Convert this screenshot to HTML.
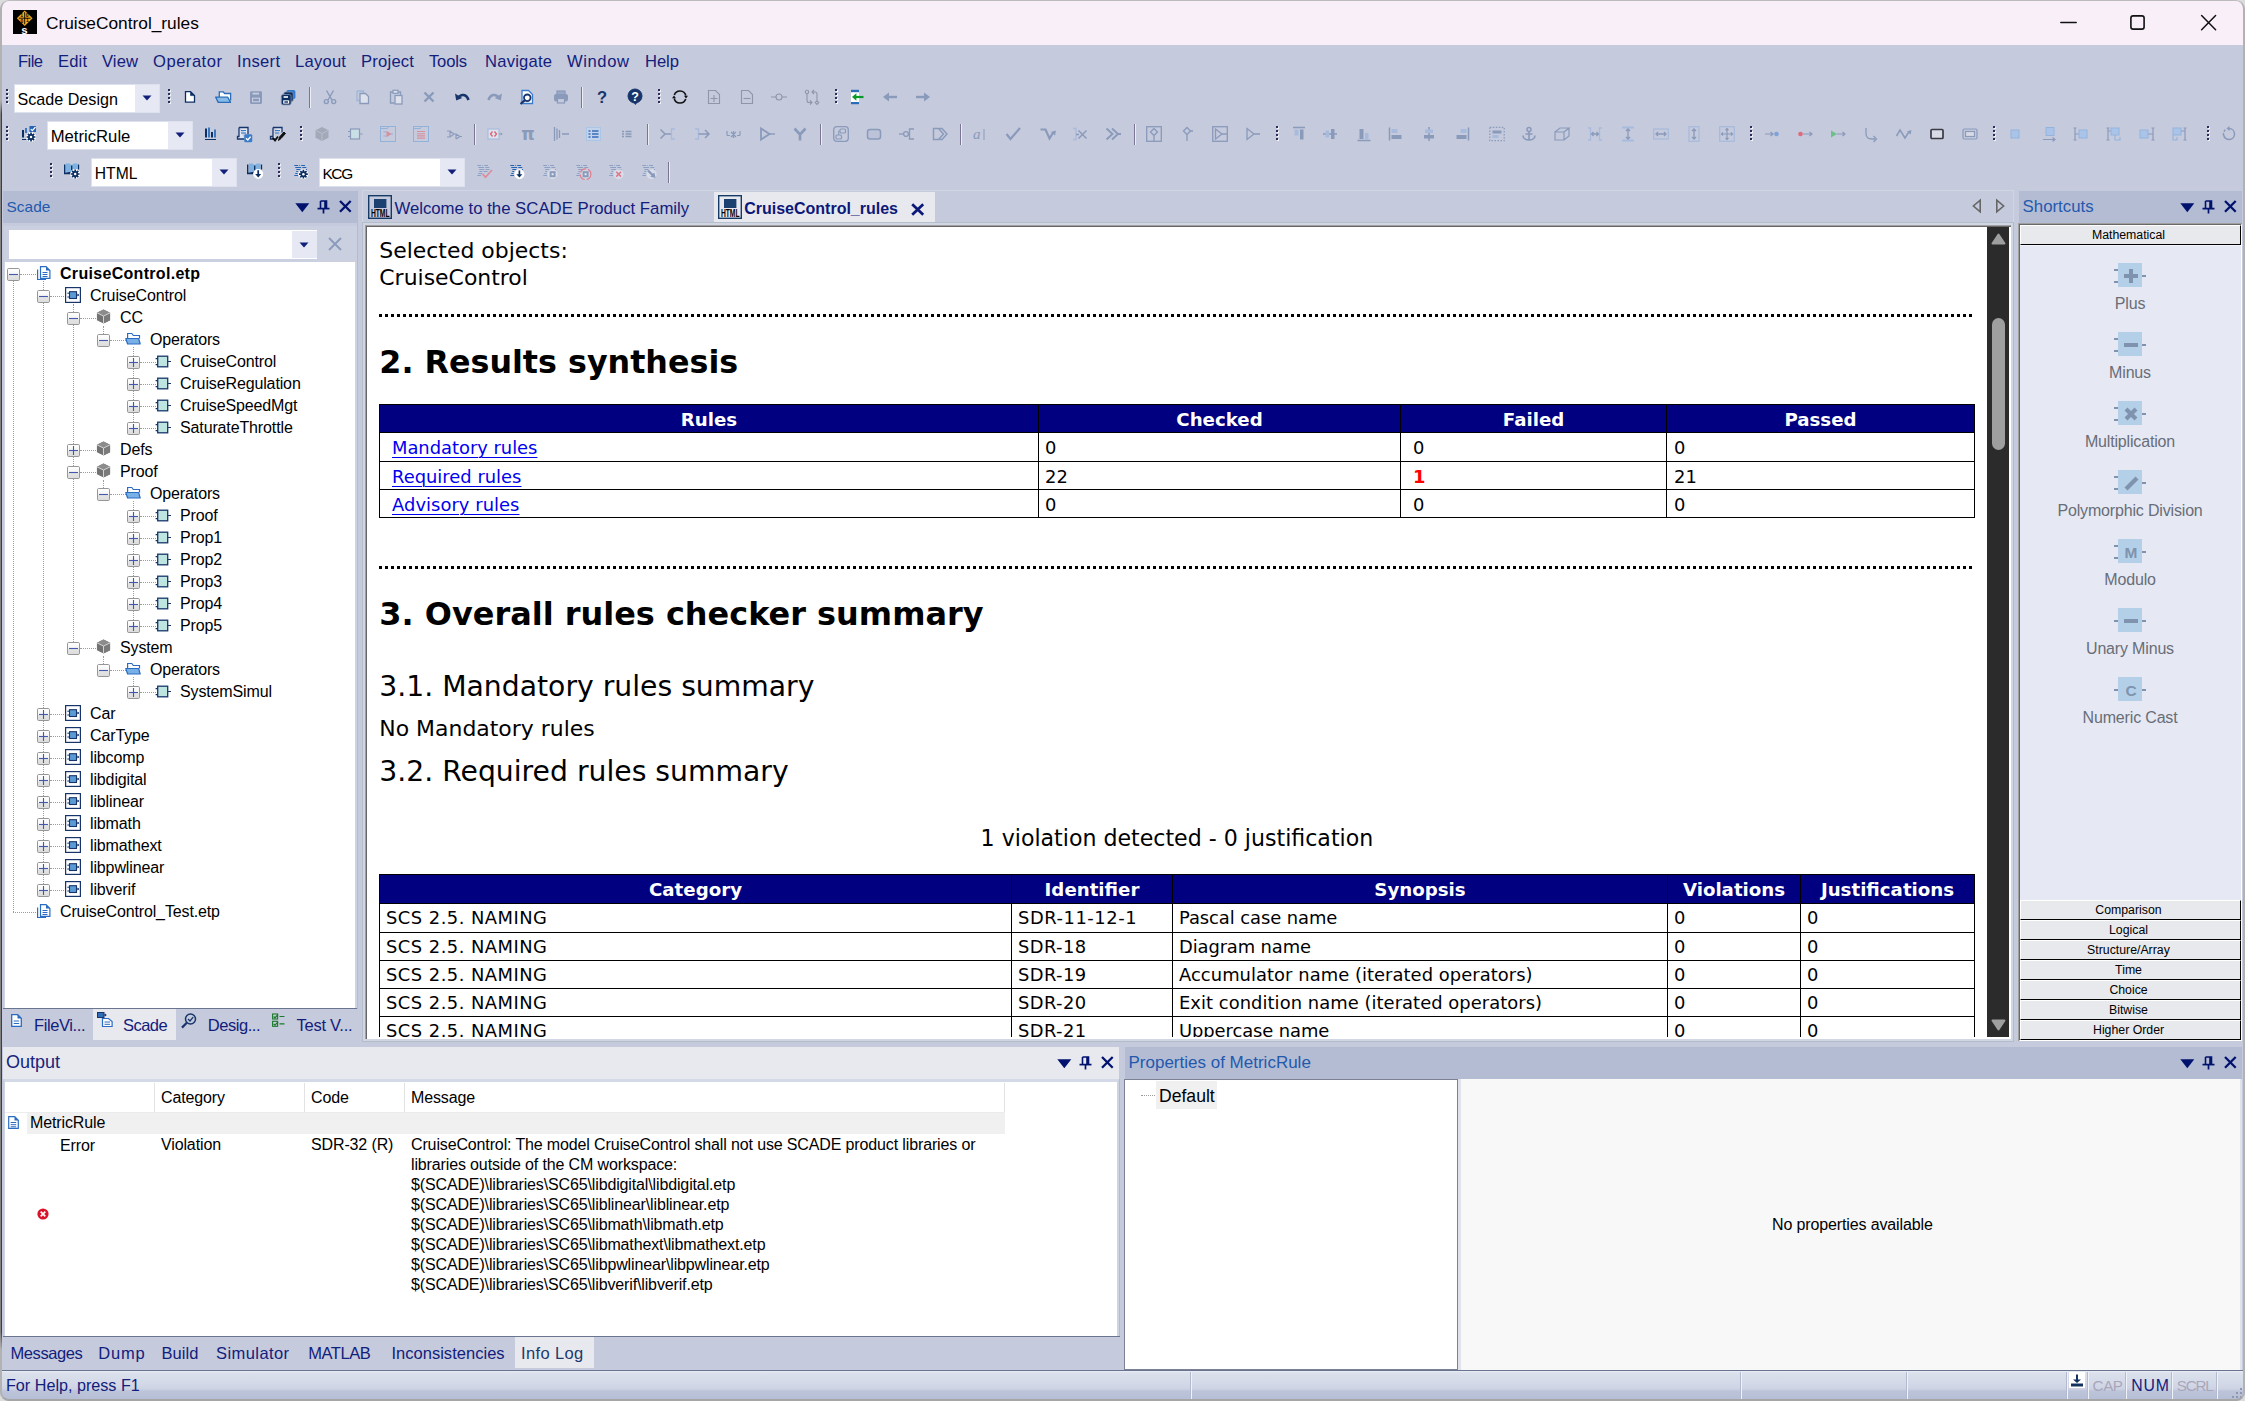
<!DOCTYPE html>
<html lang="en"><head><meta charset="utf-8"><title>CruiseControl_rules</title>
<style>
html,body{margin:0;padding:0;}
body{width:2245px;height:1401px;overflow:hidden;background:#dcdcdc;font-family:"Liberation Sans",sans-serif;}
#app{position:absolute;left:0;top:0;width:2245px;height:1401px;overflow:hidden;border-radius:9px;background:#c5cadc;}
#app div,#app svg,#app span.a,#app table.a{position:absolute;box-sizing:border-box;}
#app svg{overflow:visible;}
#winborder{position:absolute;left:0;top:0;width:2245px;height:1401px;box-sizing:border-box;border:2px solid #b2b2b2;border-top-width:1.5px;border-top-color:#bcbcbc;border-bottom-color:#a6a6a6;border-radius:9px;pointer-events:none;}
#winshadow{position:absolute;left:0;top:100px;width:2px;height:1250px;background:linear-gradient(90deg,#828282 0 50%,#3e3e42 50% 100%);-webkit-mask-image:linear-gradient(180deg,transparent 0,#000 14px,#000 1232px,transparent 100%);mask-image:linear-gradient(180deg,transparent 0,#000 14px,#000 1232px,transparent 100%);}

</style></head>
<body>
<div id="app">
<!-- frame -->
<div style="left:0px;top:0px;width:2245px;height:45px;background:#f8eff8;"></div>
<div style="left:0px;top:45px;width:2245px;height:1356px;background:#c5cadc;"></div>
<div style="left:13px;top:10px;width:24px;height:24px;background:#000;"></div>
<svg style="left:13px;top:10px;" width="24" height="24" viewBox="0 0 24 24"><path d="M11.7 0.6L19.6 8.2 11.7 16 3.9 8.2z" fill="#f3a81c"/><path d="M11.7 2.2v12M5.8 8.2h11.8" stroke="#000" stroke-width="0.9"/><text x="8.7" y="7" font-size="5" font-weight="bold" fill="#000" text-anchor="middle" font-family="Liberation Sans, sans-serif">1</text><text x="14.2" y="7.2" font-size="5" font-weight="bold" fill="#000" text-anchor="middle" font-family="Liberation Sans, sans-serif">0</text><text x="9" y="12.6" font-size="5" font-weight="bold" fill="#000" text-anchor="middle" font-family="Liberation Sans, sans-serif">0</text><text x="14.4" y="12.4" font-size="5" font-weight="bold" fill="#000" text-anchor="middle" font-family="Liberation Sans, sans-serif">1</text><text x="11.4" y="24" font-size="11.5" font-weight="bold" fill="#fff" text-anchor="middle" font-family="Liberation Sans, sans-serif">s</text></svg>
<div style="left:46px;top:12.0px;line-height:22px;font-size:17.31px;color:#000;white-space:nowrap;">CruiseControl_rules</div>
<svg style="left:2060px;top:16px;" width="18" height="14" viewBox="0 0 18 14"><path d="M0.8 6.4h15.4" stroke="#111" stroke-width="1.5" stroke-linecap="round"/></svg>
<svg style="left:2129px;top:14px;" width="18" height="18" viewBox="0 0 18 18"><rect x="1.9" y="1.9" width="13.2" height="13.2" rx="2.2" fill="none" stroke="#111" stroke-width="1.6"/></svg>
<svg style="left:2200px;top:14px;" width="18" height="18" viewBox="0 0 18 18"><path d="M1.6 1.5l14 14.2M15.6 1.5l-14 14.2" stroke="#111" stroke-width="1.5" stroke-linecap="round"/></svg>
<div style="left:18px;top:51.1px;line-height:21px;font-size:16.6px;color:#12207c;white-space:nowrap;letter-spacing:-0.583px;">File</div>
<div style="left:58px;top:51.1px;line-height:21px;font-size:16.6px;color:#12207c;white-space:nowrap;letter-spacing:0.132px;">Edit</div>
<div style="left:102px;top:51.1px;line-height:21px;font-size:16.6px;color:#12207c;white-space:nowrap;letter-spacing:0.106px;">View</div>
<div style="left:153px;top:51.1px;line-height:21px;font-size:16.6px;color:#12207c;white-space:nowrap;letter-spacing:0.499px;">Operator</div>
<div style="left:237px;top:51.1px;line-height:21px;font-size:16.6px;color:#12207c;white-space:nowrap;letter-spacing:0.297px;">Insert</div>
<div style="left:295px;top:51.1px;line-height:21px;font-size:16.6px;color:#12207c;white-space:nowrap;letter-spacing:0.232px;">Layout</div>
<div style="left:361px;top:51.1px;line-height:21px;font-size:16.6px;color:#12207c;white-space:nowrap;letter-spacing:0.223px;">Project</div>
<div style="left:429px;top:51.1px;line-height:21px;font-size:16.6px;color:#12207c;white-space:nowrap;letter-spacing:-0.188px;">Tools</div>
<div style="left:485px;top:51.1px;line-height:21px;font-size:16.6px;color:#12207c;white-space:nowrap;letter-spacing:0.212px;">Navigate</div>
<div style="left:567px;top:51.1px;line-height:21px;font-size:16.6px;color:#12207c;white-space:nowrap;letter-spacing:0.592px;">Window</div>
<div style="left:645px;top:51.1px;line-height:21px;font-size:16.6px;color:#12207c;white-space:nowrap;letter-spacing:-0.047px;">Help</div>
<!-- toolbars -->
<svg style="left:6px;top:89px;" width="4" height="16" viewBox="0 0 4 16"><rect x="1" y="1" width="2" height="2" fill="#f2f4fa"/><rect x="0" y="0" width="2" height="2" fill="#2e2b5a"/><rect x="1" y="5" width="2" height="2" fill="#f2f4fa"/><rect x="0" y="4" width="2" height="2" fill="#2e2b5a"/><rect x="1" y="9" width="2" height="2" fill="#f2f4fa"/><rect x="0" y="8" width="2" height="2" fill="#2e2b5a"/><rect x="1" y="13" width="2" height="2" fill="#f2f4fa"/><rect x="0" y="12" width="2" height="2" fill="#2e2b5a"/></svg>
<div style="left:14px;top:84px;width:146px;height:29px;background:#fff;border:1px solid #dde1ee;"></div><div style="left:135px;top:85px;width:24px;height:27px;background:#e6e9f3;"></div><svg style="left:142px;top:95px;" width="10" height="6" viewBox="0 0 10 6"><path d="M0.5 0.5h9L5 5.5z" fill="#12207c"/></svg><div style="left:17.5px;top:89.0px;line-height:20px;font-size:16.14px;color:#000;white-space:nowrap;">Scade Design</div>
<svg style="left:168px;top:89px;" width="4" height="16" viewBox="0 0 4 16"><rect x="1" y="1" width="2" height="2" fill="#f2f4fa"/><rect x="0" y="0" width="2" height="2" fill="#2e2b5a"/><rect x="1" y="5" width="2" height="2" fill="#f2f4fa"/><rect x="0" y="4" width="2" height="2" fill="#2e2b5a"/><rect x="1" y="9" width="2" height="2" fill="#f2f4fa"/><rect x="0" y="8" width="2" height="2" fill="#2e2b5a"/><rect x="1" y="13" width="2" height="2" fill="#f2f4fa"/><rect x="0" y="12" width="2" height="2" fill="#2e2b5a"/></svg>
<svg style="left:182.0px;top:89.0px;" width="16" height="16" viewBox="0 0 16 16"><path d="M3.5 2.6h5l4 4v6.6h-9z" stroke="#0b2f63" stroke-width="1.3" fill="#fff" /><path d="M8.5 2.6v4h4z" stroke="#0b2f63" stroke-width="0.6" fill="#0b2f63" /></svg>
<svg style="left:215.0px;top:89.0px;" width="16" height="16" viewBox="0 0 16 16"><path d="M4.3 8V2.8h4l1.3 1.7h6v7" stroke="#2b6cb8" stroke-width="1.3" fill="#fff" /><path d="M0.7 8.2h12.1l2.7 5.2H3.2z" stroke="#2b6cb8" stroke-width="1.3" fill="#86bbe8" stroke-linejoin="round"/></svg>
<svg style="left:248.0px;top:89.0px;" width="16" height="16" viewBox="0 0 16 16"><rect x="2" y="2.2" width="12" height="12.7" rx="1.3" stroke="none" stroke-width="0" fill="#8a9abb" /><rect x="4.5" y="3.7" width="6.5" height="1.8" rx="0" stroke="none" stroke-width="0" fill="#c9cede" /><rect x="4" y="8.7" width="8" height="4.6" rx="0" stroke="none" stroke-width="0" fill="#c9cede" /><rect x="5.1" y="9.8" width="5.8" height="2.4" rx="0" stroke="none" stroke-width="0" fill="#8a9abb" /></svg>
<svg style="left:280.0px;top:89.0px;" width="16" height="16" viewBox="0 0 16 16"><rect x="6.3" y="1" width="9.1" height="9" rx="1.8" stroke="none" stroke-width="0" fill="#2f7acc" /><rect x="3.8" y="3" width="9.4" height="9.6" rx="1.8" stroke="#8a93ad" stroke-width="0.8" fill="#0b2f63" /><rect x="1.3" y="5.5" width="9.8" height="10.4" rx="1.8" stroke="#8a93ad" stroke-width="0.8" fill="#0b2f63" /><rect x="3.6" y="7.2" width="4.4" height="1.6" rx="0" stroke="none" stroke-width="0" fill="#fff" /><rect x="3.2" y="11.3" width="6" height="3.3" rx="0" stroke="none" stroke-width="0" fill="#fff" /><rect x="4.4" y="12.3" width="3.6" height="1.4" rx="0" stroke="none" stroke-width="0" fill="#0b2f63" /></svg>
<svg style="left:322.0px;top:89.0px;" width="16" height="16" viewBox="0 0 16 16"><path d="M4.5 1.5l5.5 9.5M11.5 1.5L6 11" stroke="#8a9abb" stroke-width="1.4" fill="none" /><circle cx="4.3" cy="12.6" r="2" stroke="#8a9abb" stroke-width="1.4" fill="none"/><circle cx="11.7" cy="12.6" r="2" stroke="#8a9abb" stroke-width="1.4" fill="none"/></svg>
<svg style="left:355.0px;top:89.0px;" width="16" height="16" viewBox="0 0 16 16"><path d="M2 2h6.5v2M2 2v9.5h2.5" stroke="#9db6d9" stroke-width="1.3" fill="none" /><path d="M5 4.5h5.5l3 3v7h-8.5z" stroke="#8a9abb" stroke-width="1.3" fill="#dde1ec" /></svg>
<svg style="left:387.5px;top:89.0px;" width="16" height="16" viewBox="0 0 16 16"><path d="M5 3H2.5v11h4" stroke="#8a9abb" stroke-width="1.3" fill="none" /><path d="M10 3h2.5v3" stroke="#8a9abb" stroke-width="1.3" fill="none" /><rect x="5" y="1.3" width="5" height="3" rx="0" stroke="#8a9abb" stroke-width="1.2" fill="#dde1ec" /><rect x="7" y="6.5" width="7" height="8.5" rx="0" stroke="#8a9abb" stroke-width="1.3" fill="#dde1ec" /></svg>
<svg style="left:421.0px;top:89.0px;" width="16" height="16" viewBox="0 0 16 16"><path d="M3.5 3.5l9 9M12.5 3.5l-9 9" stroke="#8a9abb" stroke-width="2.4" fill="none" /></svg>
<svg style="left:454.0px;top:89.0px;" width="16" height="16" viewBox="0 0 16 16"><path d="M4 9C7 4.5 12.5 5 14.5 11" stroke="#17356b" stroke-width="2.6" fill="none" /><path d="M1 4.5l1.2 7 6-2.4z" fill="#17356b"/></svg>
<svg style="left:486.5px;top:89.0px;" width="16" height="16" viewBox="0 0 16 16"><path d="M12 9C9 4.5 3.5 5 1.5 11" stroke="#8a9abb" stroke-width="2.6" fill="none" /><path d="M15 4.5l-1.2 7-6-2.4z" fill="#8a9abb"/></svg>
<svg style="left:519.0px;top:89.0px;" width="16" height="16" viewBox="0 0 16 16"><path d="M3 1.5h6.5l4 4v9H3z" stroke="#3b7cc9" stroke-width="1.3" fill="#fff" /><circle cx="8.3" cy="8.8" r="3.3" stroke="#17356b" stroke-width="1.8" fill="#fff"/><path d="M6 11.2L1.5 15" stroke="#17356b" stroke-width="2.2" fill="none" /></svg>
<svg style="left:553.0px;top:89.0px;" width="16" height="16" viewBox="0 0 16 16"><rect x="4" y="2" width="8" height="4" rx="0" stroke="#8a9abb" stroke-width="1.2" fill="#9aa9c6" /><rect x="1.5" y="5.5" width="13" height="6.5" rx="1.5" stroke="#8a9abb" stroke-width="1" fill="#8a9abb" /><rect x="4.5" y="9.5" width="7" height="4.5" rx="0" stroke="#8a9abb" stroke-width="1.2" fill="#c5cadc" /></svg>
<svg style="left:594.0px;top:89.0px;" width="16" height="16" viewBox="0 0 16 16"><text x="8" y="14" font-size="16.5" font-weight="bold" fill="#17356b" text-anchor="middle" font-family="Liberation Sans, sans-serif">?</text></svg>
<svg style="left:627.0px;top:89.0px;" width="16" height="16" viewBox="0 0 16 16"><circle cx="8" cy="7" r="7" stroke="#17356b" stroke-width="1" fill="#17356b"/><path d="M6 13l2.5 3 2-3z" fill="#17356b"/><text x="8" y="11.6" font-size="12.5" font-weight="bold" fill="#fff" text-anchor="middle" font-family="Liberation Sans, sans-serif">?</text></svg>
<svg style="left:672.0px;top:89.0px;" width="16" height="16" viewBox="0 0 16 16"><path d="M13.8 6.5A6 6 0 0 0 2.3 6" stroke="#111" stroke-width="1.6" fill="none" /><path d="M2.2 9.5A6 6 0 0 0 13.7 10" stroke="#111" stroke-width="1.6" fill="none" /><path d="M12 6.8h4l-2 2.8z M4 9.2H0l2-2.8z" fill="#111"/></svg>
<svg style="left:705.5px;top:89.0px;" width="16" height="16" viewBox="0 0 16 16"><path d="M2.5 1.5h7l4 4v9h-11z" stroke="#9096a8" stroke-width="1.1" fill="none" /><path d="M8 6v7M4.5 9.5h7" stroke="#9096a8" stroke-width="1.1" fill="none" /></svg>
<svg style="left:738.5px;top:89.0px;" width="16" height="16" viewBox="0 0 16 16"><path d="M2.5 1.5h7l4 4v9h-11z" stroke="#9096a8" stroke-width="1.1" fill="none" /><path d="M4.5 9.5h7" stroke="#9096a8" stroke-width="1.1" fill="none" /></svg>
<svg style="left:771.0px;top:89.0px;" width="16" height="16" viewBox="0 0 16 16"><path d="M0 8h5M11 8h5" stroke="#9096a8" stroke-width="1.1" fill="none" /><circle cx="8" cy="8" r="3" stroke="#9096a8" stroke-width="1.1" fill="none"/></svg>
<svg style="left:804.0px;top:89.0px;" width="16" height="16" viewBox="0 0 16 16"><circle cx="3" cy="3" r="1.7" stroke="#9096a8" stroke-width="1.1" fill="none"/><path d="M13 11.8l1.8 1.8-1.8 1.8-1.8-1.8z" stroke="#9096a8" stroke-width="1.1" fill="none" /><path d="M3 5v6.5q0 2 2 2h2.5M13 11.5V5q0-2-2-2H8.5M6 11.5l2 2-2 2M10 1l-2 2 2 2" stroke="#9096a8" stroke-width="1.1" fill="none" /></svg>
<svg style="left:848.0px;top:89.0px;" width="16" height="16" viewBox="0 0 16 16"><rect x="3" y="1" width="8" height="14" rx="0" stroke="none" stroke-width="0" fill="#fff" /><rect x="3" y="0.8" width="8" height="2.4" rx="0" stroke="none" stroke-width="0" fill="#2b6cb8" /><rect x="3" y="13" width="8" height="2.2" rx="0" stroke="none" stroke-width="0" fill="#2b6cb8" /><path d="M7 8h8.5" stroke="#0a9a2a" stroke-width="2.2" fill="none" /><path d="M4 8l4.4-3.8v7.6z" fill="#0a9a2a"/></svg>
<svg style="left:882.0px;top:89.0px;" width="16" height="16" viewBox="0 0 16 16"><path d="M6 8h9" stroke="#8a9abb" stroke-width="2.4" fill="none" /><path d="M1 8l6-4.5v9z" fill="#8a9abb"/></svg>
<svg style="left:915.0px;top:89.0px;" width="16" height="16" viewBox="0 0 16 16"><path d="M1 8h9" stroke="#8a9abb" stroke-width="2.4" fill="none" /><path d="M15 8l-6-4.5v9z" fill="#8a9abb"/></svg>
<div style="left:309px;top:87px;width:2px;height:21px;background:linear-gradient(90deg,#7a7592 0 50%,#eceef6 50% 100%);"></div>
<div style="left:581px;top:87px;width:2px;height:21px;background:linear-gradient(90deg,#7a7592 0 50%,#eceef6 50% 100%);"></div>
<svg style="left:658px;top:89px;" width="4" height="16" viewBox="0 0 4 16"><rect x="1" y="1" width="2" height="2" fill="#f2f4fa"/><rect x="0" y="0" width="2" height="2" fill="#2e2b5a"/><rect x="1" y="5" width="2" height="2" fill="#f2f4fa"/><rect x="0" y="4" width="2" height="2" fill="#2e2b5a"/><rect x="1" y="9" width="2" height="2" fill="#f2f4fa"/><rect x="0" y="8" width="2" height="2" fill="#2e2b5a"/><rect x="1" y="13" width="2" height="2" fill="#f2f4fa"/><rect x="0" y="12" width="2" height="2" fill="#2e2b5a"/></svg>
<svg style="left:835px;top:89px;" width="4" height="16" viewBox="0 0 4 16"><rect x="1" y="1" width="2" height="2" fill="#f2f4fa"/><rect x="0" y="0" width="2" height="2" fill="#2e2b5a"/><rect x="1" y="5" width="2" height="2" fill="#f2f4fa"/><rect x="0" y="4" width="2" height="2" fill="#2e2b5a"/><rect x="1" y="9" width="2" height="2" fill="#f2f4fa"/><rect x="0" y="8" width="2" height="2" fill="#2e2b5a"/><rect x="1" y="13" width="2" height="2" fill="#f2f4fa"/><rect x="0" y="12" width="2" height="2" fill="#2e2b5a"/></svg>
<svg style="left:6px;top:126px;" width="4" height="16" viewBox="0 0 4 16"><rect x="1" y="1" width="2" height="2" fill="#f2f4fa"/><rect x="0" y="0" width="2" height="2" fill="#2e2b5a"/><rect x="1" y="5" width="2" height="2" fill="#f2f4fa"/><rect x="0" y="4" width="2" height="2" fill="#2e2b5a"/><rect x="1" y="9" width="2" height="2" fill="#f2f4fa"/><rect x="0" y="8" width="2" height="2" fill="#2e2b5a"/><rect x="1" y="13" width="2" height="2" fill="#f2f4fa"/><rect x="0" y="12" width="2" height="2" fill="#2e2b5a"/></svg>
<svg style="left:21.0px;top:126.0px;" width="16" height="16" viewBox="0 0 16 16"><rect x="1" y="4" width="2" height="7.5" rx="0" stroke="none" stroke-width="0" fill="#0b2f63" /><rect x="4" y="2" width="2" height="5" rx="0" stroke="none" stroke-width="0" fill="#3c78c0" /><path d="M1 13.5h4.5" stroke="#0b2f63" stroke-width="1" fill="none" /><rect x="8.5" y="0" width="6.5" height="6" rx="0" stroke="none" stroke-width="0" fill="#2563b4" /><path d="M9.8 3.1l1.5 1.5 3.2-3.6" stroke="#fff" stroke-width="1.2" fill="none" /><circle cx="10" cy="11" r="5.1" fill="#fff"/><path d="M11.50 11.00L14.40 11.00M11.06 12.06L13.11 14.11M10.00 12.50L10.00 15.40M8.94 12.06L6.89 14.11M8.50 11.00L5.60 11.00M8.94 9.94L6.89 7.89M10.00 9.50L10.00 6.60M11.06 9.94L13.11 7.89" stroke="#0b2f63" stroke-width="1.7"/><circle cx="10" cy="11" r="2.9" fill="#0b2f63"/><circle cx="10" cy="11" r="1.25" fill="#fff"/></svg>
<div style="left:47px;top:121px;width:146px;height:29px;background:#fff;border:1px solid #dde1ee;"></div><div style="left:168px;top:122px;width:24px;height:27px;background:#e6e9f3;"></div><svg style="left:175px;top:132px;" width="10" height="6" viewBox="0 0 10 6"><path d="M0.5 0.5h9L5 5.5z" fill="#12207c"/></svg><div style="left:50.7px;top:125.5px;line-height:21px;font-size:16.68px;color:#000;white-space:nowrap;">MetricRule</div>
<svg style="left:202.0px;top:126.0px;" width="16" height="16" viewBox="0 0 16 16"><rect x="3" y="2.5" width="2" height="9" rx="0" stroke="none" stroke-width="0" fill="#0b2f63" /><rect x="6" y="1.5" width="2" height="10" rx="0" stroke="none" stroke-width="0" fill="#3c78c0" /><rect x="9" y="6" width="2" height="5.5" rx="0" stroke="none" stroke-width="0" fill="#0b2f63" /><rect x="12" y="3.5" width="2" height="8" rx="0" stroke="none" stroke-width="0" fill="#3c78c0" /><path d="M3 13.5h11" stroke="#0b2f63" stroke-width="1" fill="none" /></svg>
<svg style="left:236.0px;top:126.0px;" width="16" height="16" viewBox="0 0 16 16"><path d="M3 1.5h9v7M3 1.5v9H1.5v2.5h7" stroke="#17356b" stroke-width="1.3" fill="#dfe7f5" /><path d="M5 4.5h5M5 7h5" stroke="#3b7cc9" stroke-width="1.1" fill="none" /><rect x="8.5" y="8.5" width="7.5" height="7.5" rx="1" stroke="#3b7cc9" stroke-width="0.5" fill="#3b7cc9" /><path d="M10 12.2l1.8 1.8 2.8-3.4" stroke="#fff" stroke-width="1.4" fill="none" /></svg>
<svg style="left:269.0px;top:126.0px;" width="16" height="16" viewBox="0 0 16 16"><path d="M4 1.5h9v5M4 1.5v9H1.5v2.5h5" stroke="#17356b" stroke-width="1.3" fill="#dfe7f5" /><path d="M6 4.5h5M6 7h4" stroke="#3b7cc9" stroke-width="1.1" fill="none" /><path d="M3.5 11.5l2.5 3 3-4" stroke="#111" stroke-width="1.8" fill="none" /><path d="M9.5 14.5l1-3.5 4.5-5 1.5 1.5-4.5 5z" stroke="#111" stroke-width="1" fill="#111" /></svg>
<svg style="left:314.0px;top:126.0px;" width="16" height="16" viewBox="0 0 16 16"><path d="M8 1l6.5 3.3v7.4L8 15l-6.5-3.3V4.3z" fill="#a3a9b8"/><path d="M1.5 4.3L8 7.6l6.5-3.3M8 7.6V15" stroke="#b9becb" stroke-width="1" fill="none"/></svg>
<svg style="left:347.0px;top:126.0px;" width="16" height="16" viewBox="0 0 16 16"><rect x="3.5" y="3" width="9" height="10" rx="0" stroke="#8a9abb" stroke-width="1.2" fill="#c9dfe6" /><path d="M1 5.5h2.5M1 10.5h2.5M12.5 8H15.5" stroke="#8a9abb" stroke-width="1.2" fill="none" /></svg>
<svg style="left:380.0px;top:126.0px;" width="16" height="16" viewBox="0 0 16 16"><rect x="0.5" y="0.5" width="15" height="15" rx="0" stroke="#93b2da" stroke-width="1" fill="none" /><path d="M0.5 2.5h7l1-2" stroke="#93b2da" stroke-width="1" fill="none" /><path d="M3.5 6h3M3.5 10h3M10 8h3" stroke="#93b2da" stroke-width="1" fill="none" /><path d="M6.5 4.8l5 3.2-5 3.2z" fill="#d9909c"/></svg>
<svg style="left:412.5px;top:126.0px;" width="16" height="16" viewBox="0 0 16 16"><rect x="0.5" y="0.5" width="15" height="15" rx="0" stroke="#93b2da" stroke-width="1" fill="none" /><path d="M0.5 2.5h7l1-2" stroke="#93b2da" stroke-width="1" fill="none" /><path d="M4 5.5h8M4 7.7h8M4 9.9h8M4 12.1h8" stroke="#d9909c" stroke-width="1.1" fill="none" /></svg>
<svg style="left:446.0px;top:126.0px;" width="16" height="16" viewBox="0 0 16 16"><path d="M1 5h3l4 3-4 3H1M4 5v6M8 8h2l4 2.5-4 2.5M10 8v5M14 10.5h2" stroke="#8a9abb" stroke-width="1.1" fill="none" /></svg>
<svg style="left:486.7px;top:126.0px;" width="16" height="16" viewBox="0 0 16 16"><rect x="1" y="3" width="11" height="10" rx="0" stroke="#a8bbdc" stroke-width="1.2" fill="#dfe3ee" /><path d="M5.5 5.5L3.5 8l2 2.5M7.5 5.5l2 2.5-2 2.5" stroke="#e06070" stroke-width="1.3" fill="none" /><path d="M12 8h3M14 6.8l1.2 1.2-1.2 1.2" stroke="#8a9abb" stroke-width="1" fill="none" /></svg>
<svg style="left:520.0px;top:126.0px;" width="16" height="16" viewBox="0 0 16 16"><text x="8" y="13.5" font-size="17" font-weight="bold" fill="#8a9abb" text-anchor="middle" font-family="DejaVu Sans, sans-serif">π</text></svg>
<svg style="left:553.0px;top:126.0px;" width="16" height="16" viewBox="0 0 16 16"><path d="M1.5 1v14M4 2.5v11M6.5 4v8M9 8h7" stroke="#8a9abb" stroke-width="1.3" fill="none" /></svg>
<svg style="left:586.0px;top:126.0px;" width="16" height="16" viewBox="0 0 16 16"><rect x="0.5" y="1.5" width="14" height="13" rx="0" stroke="#a9c6e6" stroke-width="1" fill="#c3d3ea" /><path d="M2.5 5h2M6 5h6.5M2.5 8h2M6 8h6.5M2.5 11h2M6 11h6.5" stroke="#5b86c8" stroke-width="1.8" fill="none" /></svg>
<svg style="left:619.0px;top:126.0px;" width="16" height="16" viewBox="0 0 16 16"><path d="M3 5.5h2M6.5 5.5h6M3 8h2M6.5 8h6M3 10.5h2M6.5 10.5h6" stroke="#8a9abb" stroke-width="1.6" fill="none" /></svg>
<svg style="left:659.6px;top:126.0px;" width="16" height="16" viewBox="0 0 16 16"><path d="M0.5 3.5L5 8 0.5 12.5M5 8h6" stroke="#8a9abb" stroke-width="1.5" fill="none" /><path d="M15 3h-3.5v10H15" stroke="#a8bbdc" stroke-width="1.3" fill="none" /></svg>
<svg style="left:693.5px;top:126.0px;" width="16" height="16" viewBox="0 0 16 16"><path d="M1 3h3.5v10H1" stroke="#a8bbdc" stroke-width="1.3" fill="none" /><path d="M4.5 8H15M11 4l4 4-4 4" stroke="#8a9abb" stroke-width="1.5" fill="none" /></svg>
<svg style="left:725.7px;top:126.0px;" width="16" height="16" viewBox="0 0 16 16"><path d="M1 5v4.5M14 5v4.5M1 9.5h3M14 9.5h-3M5 6l5 5M10 6l-5 5M7.5 5v7" stroke="#8a9abb" stroke-width="1.2" fill="none" /></svg>
<svg style="left:759.0px;top:126.0px;" width="16" height="16" viewBox="0 0 16 16"><path d="M2 2.5l8.5 5.5L2 13.5z" stroke="#8a9abb" stroke-width="1.8" fill="none" /><path d="M10.5 8H16" stroke="#8a9abb" stroke-width="1.4" fill="none" /></svg>
<svg style="left:792.0px;top:126.0px;" width="16" height="16" viewBox="0 0 16 16"><path d="M2.5 2.5L8 8.5l5.5-6M8 8.5V14.5" stroke="#8a9abb" stroke-width="2.6" fill="none" /></svg>
<svg style="left:833.0px;top:126.0px;" width="16" height="16" viewBox="0 0 16 16"><rect x="0.7" y="0.7" width="14.6" height="14.6" rx="3" stroke="#8a9abb" stroke-width="1.3" fill="none" /><rect x="7" y="3" width="5.5" height="4" rx="1" stroke="#8a9abb" stroke-width="1.2" fill="#c5cadc" /><rect x="3" y="9" width="5.5" height="4" rx="1" stroke="#8a9abb" stroke-width="1.2" fill="#c5cadc" /><path d="M5.7 9V5h1.3" stroke="#8a9abb" stroke-width="1" fill="none" /></svg>
<svg style="left:866.0px;top:126.0px;" width="16" height="16" viewBox="0 0 16 16"><rect x="1.5" y="3.5" width="13" height="9.5" rx="2.5" stroke="#8a9abb" stroke-width="1.5" fill="#bcc2d8" /></svg>
<svg style="left:899.0px;top:126.0px;" width="16" height="16" viewBox="0 0 16 16"><path d="M0 8h4.5" stroke="#8a9abb" stroke-width="1.3" fill="none" /><circle cx="7" cy="8" r="2.4" stroke="#8a9abb" stroke-width="1.3" fill="none"/><path d="M15 3H10.5v10H15" stroke="#8a9abb" stroke-width="1.3" fill="none" /></svg>
<svg style="left:931.7px;top:126.0px;" width="16" height="16" viewBox="0 0 16 16"><path d="M1.5 2.5h5l5 5.5-5 5.5h-5zM7.5 2.5h2.5l5 5.5-5 5.5H7.5" stroke="#8a9abb" stroke-width="1.4" fill="none" /></svg>
<svg style="left:972.6px;top:126.0px;" width="16" height="16" viewBox="0 0 16 16"><text x="0" y="13" font-size="15" font-style="italic" fill="#8a9abb" font-family="Liberation Serif, serif">a</text><path d="M11 3v11" stroke="#8a9abb" stroke-width="1" fill="none" /></svg>
<svg style="left:1005.4px;top:126.0px;" width="16" height="16" viewBox="0 0 16 16"><path d="M1.5 8l4 5L15 2" stroke="#8a9abb" stroke-width="2.2" fill="none" /></svg>
<svg style="left:1039.6px;top:126.0px;" width="16" height="16" viewBox="0 0 16 16"><path d="M0.5 3.5h5l4 9 4-6.5" stroke="#8a9abb" stroke-width="2.2" fill="none" /><path d="M16 4.5l-5 1.5 4 3.5z" fill="#8a9abb"/></svg>
<svg style="left:1072.0px;top:126.0px;" width="16" height="16" viewBox="0 0 16 16"><path d="M1 2.5h3v11H1" stroke="#a8bbdc" stroke-width="1.3" fill="none" /><path d="M6.5 4.5l8 8M14.5 4.5l-8 8M4 8.5h3" stroke="#8a9abb" stroke-width="1.5" fill="none" /></svg>
<svg style="left:1104.7px;top:126.0px;" width="16" height="16" viewBox="0 0 16 16"><path d="M1.5 2.5l6 5.5-6 5.5M7 2.5l6 5.5-6 5.5M13 8h3" stroke="#8a9abb" stroke-width="1.9" fill="none" /></svg>
<svg style="left:1146.0px;top:126.0px;" width="16" height="16" viewBox="0 0 16 16"><rect x="0.7" y="0.7" width="14.6" height="14.6" rx="0" stroke="#8a9abb" stroke-width="1.3" fill="none" /><path d="M8 2.5l3.5 3.5L8 9.5 4.5 6zM8 9.5V15" stroke="#8a9abb" stroke-width="1.3" fill="none" /></svg>
<svg style="left:1179.0px;top:126.0px;" width="16" height="16" viewBox="0 0 16 16"><path d="M8 1.5l3.5 3.5L8 8.5 4.5 5zM8 8.5V15M11.5 5H14" stroke="#8a9abb" stroke-width="1.3" fill="none" /></svg>
<svg style="left:1212.0px;top:126.0px;" width="16" height="16" viewBox="0 0 16 16"><rect x="0.7" y="0.7" width="14.6" height="14.6" rx="0" stroke="#8a9abb" stroke-width="1.3" fill="none" /><path d="M3.5 3l6.5 5-6.5 5zM10 8h5" stroke="#8a9abb" stroke-width="1.3" fill="none" /></svg>
<svg style="left:1245.0px;top:126.0px;" width="16" height="16" viewBox="0 0 16 16"><path d="M2 2.5l7 5.5-7 5.5zM9 8h6" stroke="#8a9abb" stroke-width="1.3" fill="none" /></svg>
<svg style="left:1290.5px;top:126.0px;" width="16" height="16" viewBox="0 0 16 16"><path d="M2 1.5h12" stroke="#8a9abb" stroke-width="1.5" fill="none" /><rect x="3.5" y="3.5" width="4" height="6" rx="0" stroke="none" stroke-width="0" fill="#a8bbdc" /><rect x="9" y="3.5" width="3.5" height="10" rx="0" stroke="none" stroke-width="0" fill="#8a9abb" /></svg>
<svg style="left:1322.4px;top:126.0px;" width="16" height="16" viewBox="0 0 16 16"><path d="M1 8h14" stroke="#8a9abb" stroke-width="1.5" fill="none" /><rect x="3.5" y="4.5" width="3.5" height="7" rx="0" stroke="none" stroke-width="0" fill="#a8bbdc" /><rect x="9" y="3" width="3.5" height="10" rx="0" stroke="none" stroke-width="0" fill="#8a9abb" /></svg>
<svg style="left:1356.0px;top:126.0px;" width="16" height="16" viewBox="0 0 16 16"><path d="M1.5 14.5h13" stroke="#8a9abb" stroke-width="1.5" fill="none" /><rect x="3.5" y="3" width="4" height="10" rx="0" stroke="none" stroke-width="0" fill="#8a9abb" /><rect x="9" y="7" width="3.5" height="6" rx="0" stroke="none" stroke-width="0" fill="#a8bbdc" /></svg>
<svg style="left:1388.0px;top:126.0px;" width="16" height="16" viewBox="0 0 16 16"><path d="M1.5 1.5v13" stroke="#8a9abb" stroke-width="1.5" fill="none" /><rect x="3.5" y="3" width="6" height="4" rx="0" stroke="none" stroke-width="0" fill="#a8bbdc" /><rect x="3.5" y="9" width="10" height="4" rx="0" stroke="none" stroke-width="0" fill="#8a9abb" /></svg>
<svg style="left:1421.0px;top:126.0px;" width="16" height="16" viewBox="0 0 16 16"><path d="M8 1v14" stroke="#8a9abb" stroke-width="1.5" fill="none" /><rect x="4" y="3.5" width="8" height="3.5" rx="0" stroke="none" stroke-width="0" fill="#a8bbdc" /><rect x="3" y="9" width="10" height="3.5" rx="0" stroke="none" stroke-width="0" fill="#8a9abb" /></svg>
<svg style="left:1454.0px;top:126.0px;" width="16" height="16" viewBox="0 0 16 16"><path d="M14.5 1.5v13" stroke="#8a9abb" stroke-width="1.5" fill="none" /><rect x="6.5" y="3" width="6" height="4" rx="0" stroke="none" stroke-width="0" fill="#a8bbdc" /><rect x="2.5" y="9" width="10" height="4" rx="0" stroke="none" stroke-width="0" fill="#8a9abb" /></svg>
<svg style="left:1488.5px;top:126.0px;" width="16" height="16" viewBox="0 0 16 16"><rect x="0.8" y="1.3" width="14.4" height="13.4" rx="0" stroke="#8a9abb" stroke-width="1.2" fill="none" stroke-dasharray="1.5 1.5"/><rect x="3.5" y="4.5" width="9" height="3" rx="0" stroke="none" stroke-width="0" fill="#8a9abb" /><rect x="3.5" y="9" width="6" height="3" rx="0" stroke="none" stroke-width="0" fill="#a8bbdc" /></svg>
<svg style="left:1520.6px;top:126.0px;" width="16" height="16" viewBox="0 0 16 16"><circle cx="8" cy="3.5" r="2" stroke="#8a9abb" stroke-width="1.5" fill="none"/><path d="M8 5.5v8M4.5 8h7M2 9.5c0 3 3 4.5 6 4.5s6-1.5 6-4.5" stroke="#8a9abb" stroke-width="1.6" fill="none" /></svg>
<svg style="left:1554.0px;top:126.0px;" width="16" height="16" viewBox="0 0 16 16"><path d="M1 6h9v8H1zM1 6l5-4h9l-5 4M15 2v8l-5 4" stroke="#8a9abb" stroke-width="1.2" fill="none" /></svg>
<svg style="left:1586.6px;top:126.0px;" width="16" height="16" viewBox="0 0 16 16"><path d="M1 2h2.5v12H1M15 2h-2.5v12H15" stroke="#a8bbdc" stroke-width="1.3" fill="none" /><path d="M4.5 8h7M6.5 6l-2 2 2 2M9.5 6l2 2-2 2" stroke="#8a9abb" stroke-width="1.3" fill="none" /></svg>
<svg style="left:1619.8px;top:126.0px;" width="16" height="16" viewBox="0 0 16 16"><path d="M2 1.5h12M2 14.5h12" stroke="#a8bbdc" stroke-width="2" fill="none" /><path d="M8 3v10M6 5l2-2 2 2M6 11l2 2 2-2" stroke="#8a9abb" stroke-width="1.3" fill="none" /></svg>
<svg style="left:1653.0px;top:126.0px;" width="16" height="16" viewBox="0 0 16 16"><rect x="0.7" y="3" width="14.6" height="10" rx="0" stroke="#a8bbdc" stroke-width="1.3" fill="none" /><path d="M3 8h10M5 6l-2 2 2 2M11 6l2 2-2 2" stroke="#8a9abb" stroke-width="1.3" fill="none" /></svg>
<svg style="left:1686.4px;top:126.0px;" width="16" height="16" viewBox="0 0 16 16"><rect x="3" y="0.7" width="10" height="14.6" rx="0" stroke="#a8bbdc" stroke-width="1.3" fill="none" /><path d="M8 3v10M6 5l2-2 2 2M6 11l2 2 2-2" stroke="#8a9abb" stroke-width="1.3" fill="none" /></svg>
<svg style="left:1719.0px;top:126.0px;" width="16" height="16" viewBox="0 0 16 16"><rect x="0.7" y="0.7" width="14.6" height="14.6" rx="0" stroke="#a8bbdc" stroke-width="1.3" fill="none" /><path d="M8 2.5v11M2.5 8h11M6.5 4l1.5-1.5L9.5 4M6.5 12l1.5 1.5L9.5 12M4 6.5L2.5 8 4 9.5M12 6.5L13.5 8 12 9.5" stroke="#8a9abb" stroke-width="1.2" fill="none" /></svg>
<svg style="left:1764.4px;top:126.0px;" width="16" height="16" viewBox="0 0 16 16"><path d="M1 8h8M6.5 6l2.5 2-2.5 2" stroke="#8a9abb" stroke-width="1.2" fill="none" /><circle cx="12.5" cy="8" r="2.3" stroke="none" stroke-width="0" fill="#7fa3d9"/></svg>
<svg style="left:1797.0px;top:126.0px;" width="16" height="16" viewBox="0 0 16 16"><circle cx="3.5" cy="8" r="2.3" stroke="none" stroke-width="0" fill="#e0697c"/><path d="M6 8h9M12.5 6l2.5 2-2.5 2" stroke="#8a9abb" stroke-width="1.2" fill="none" /></svg>
<svg style="left:1829.7px;top:126.0px;" width="16" height="16" viewBox="0 0 16 16"><path d="M1 4.5l6 3.5-6 3.5z" fill="#6cc08a"/><path d="M7 8h8M12.5 6l2.5 2-2.5 2" stroke="#8a9abb" stroke-width="1.2" fill="none" /></svg>
<svg style="left:1863.0px;top:126.0px;" width="16" height="16" viewBox="0 0 16 16"><path d="M3 2v5.5q0 5.5 6 5.5h3M10.5 10l3 3-3 3" stroke="#8a9abb" stroke-width="1.3" fill="none" /></svg>
<svg style="left:1895.8px;top:126.0px;" width="16" height="16" viewBox="0 0 16 16"><path d="M0.5 10l3.5-6 5 8 3.5-5.5" stroke="#8a9abb" stroke-width="1.5" fill="none" /><path d="M15.5 4l-4.5 1.5 3.5 3z" fill="#8a9abb"/></svg>
<svg style="left:1929.0px;top:126.0px;" width="16" height="16" viewBox="0 0 16 16"><rect x="2" y="3.5" width="12" height="9" rx="1" stroke="#3a3a44" stroke-width="1.7" fill="#d8dbe6" /></svg>
<svg style="left:1962.0px;top:126.0px;" width="16" height="16" viewBox="0 0 16 16"><rect x="1" y="3" width="14" height="10" rx="1.5" stroke="#8a9abb" stroke-width="1.2" fill="none" /><rect x="3.5" y="5.5" width="9" height="5" rx="0" stroke="#8a9abb" stroke-width="1.2" fill="#d8dbe6" /></svg>
<svg style="left:2007.0px;top:126.0px;" width="16" height="16" viewBox="0 0 16 16"><rect x="4" y="4" width="8" height="8" rx="0" stroke="#95b4dd" stroke-width="1" fill="#a9c4e8" /></svg>
<svg style="left:2041.0px;top:126.0px;" width="16" height="16" viewBox="0 0 16 16"><rect x="5" y="1.5" width="8" height="8" rx="0" stroke="#95b4dd" stroke-width="1" fill="#a9c4e8" /><path d="M2 13.5h12M11.5 11.5l2.5 2-2.5 2" stroke="#8a9abb" stroke-width="1.2" fill="none" /></svg>
<svg style="left:2073.0px;top:126.0px;" width="16" height="16" viewBox="0 0 16 16"><path d="M2 2v12M0.5 2h3M0.5 14h3M2 8h4" stroke="#8a9abb" stroke-width="1.2" fill="none" /><rect x="6" y="4" width="8" height="8" rx="0" stroke="#95b4dd" stroke-width="1" fill="#a9c4e8" /></svg>
<svg style="left:2106.0px;top:126.0px;" width="16" height="16" viewBox="0 0 16 16"><path d="M2 2v12M0.5 2h3M0.5 14h3M2 5h3" stroke="#8a9abb" stroke-width="1.2" fill="none" /><rect x="5" y="2" width="8" height="7" rx="0" stroke="#95b4dd" stroke-width="1" fill="#a9c4e8" /><path d="M9 9v5h5v-3" stroke="#95b4dd" stroke-width="1.2" fill="none" /></svg>
<svg style="left:2139.0px;top:126.0px;" width="16" height="16" viewBox="0 0 16 16"><rect x="1" y="4" width="8" height="8" rx="0" stroke="#95b4dd" stroke-width="1" fill="#a9c4e8" /><path d="M9 8h5M14 2v12M12.5 2h3M12.5 14h3" stroke="#8a9abb" stroke-width="1.2" fill="none" /></svg>
<svg style="left:2171.0px;top:126.0px;" width="16" height="16" viewBox="0 0 16 16"><rect x="2" y="2" width="8" height="7" rx="0" stroke="#95b4dd" stroke-width="1" fill="#a9c4e8" /><path d="M2 9v5h4v-3" stroke="#95b4dd" stroke-width="1.2" fill="none" /><path d="M10 5h4M14 2v12M12.5 2h3M12.5 14h3" stroke="#8a9abb" stroke-width="1.2" fill="none" /></svg>
<svg style="left:2220.8px;top:126.0px;" width="16" height="16" viewBox="0 0 16 16"><path d="M8 2.5A5.5 5.5 0 1 1 2.6 9" stroke="#8a9abb" stroke-width="1.5" fill="none" stroke-dasharray="20 0"/><path d="M2.5 9A5.5 5.5 0 0 1 5 3.4" stroke="#8a9abb" stroke-width="1.5" fill="none" stroke-dasharray="2 1.5"/><path d="M8.5 0v5L5.5 2.5z" fill="#8a9abb"/></svg>
<div style="left:474px;top:124px;width:2px;height:21px;background:linear-gradient(90deg,#7a7592 0 50%,#eceef6 50% 100%);"></div>
<div style="left:647px;top:124px;width:2px;height:21px;background:linear-gradient(90deg,#7a7592 0 50%,#eceef6 50% 100%);"></div>
<div style="left:820px;top:124px;width:2px;height:21px;background:linear-gradient(90deg,#7a7592 0 50%,#eceef6 50% 100%);"></div>
<div style="left:960px;top:124px;width:2px;height:21px;background:linear-gradient(90deg,#7a7592 0 50%,#eceef6 50% 100%);"></div>
<div style="left:1134px;top:124px;width:2px;height:21px;background:linear-gradient(90deg,#7a7592 0 50%,#eceef6 50% 100%);"></div>
<svg style="left:300px;top:126px;" width="4" height="16" viewBox="0 0 4 16"><rect x="1" y="1" width="2" height="2" fill="#f2f4fa"/><rect x="0" y="0" width="2" height="2" fill="#2e2b5a"/><rect x="1" y="5" width="2" height="2" fill="#f2f4fa"/><rect x="0" y="4" width="2" height="2" fill="#2e2b5a"/><rect x="1" y="9" width="2" height="2" fill="#f2f4fa"/><rect x="0" y="8" width="2" height="2" fill="#2e2b5a"/><rect x="1" y="13" width="2" height="2" fill="#f2f4fa"/><rect x="0" y="12" width="2" height="2" fill="#2e2b5a"/></svg>
<svg style="left:1276px;top:126px;" width="4" height="16" viewBox="0 0 4 16"><rect x="1" y="1" width="2" height="2" fill="#f2f4fa"/><rect x="0" y="0" width="2" height="2" fill="#2e2b5a"/><rect x="1" y="5" width="2" height="2" fill="#f2f4fa"/><rect x="0" y="4" width="2" height="2" fill="#2e2b5a"/><rect x="1" y="9" width="2" height="2" fill="#f2f4fa"/><rect x="0" y="8" width="2" height="2" fill="#2e2b5a"/><rect x="1" y="13" width="2" height="2" fill="#f2f4fa"/><rect x="0" y="12" width="2" height="2" fill="#2e2b5a"/></svg>
<svg style="left:1750px;top:126px;" width="4" height="16" viewBox="0 0 4 16"><rect x="1" y="1" width="2" height="2" fill="#f2f4fa"/><rect x="0" y="0" width="2" height="2" fill="#2e2b5a"/><rect x="1" y="5" width="2" height="2" fill="#f2f4fa"/><rect x="0" y="4" width="2" height="2" fill="#2e2b5a"/><rect x="1" y="9" width="2" height="2" fill="#f2f4fa"/><rect x="0" y="8" width="2" height="2" fill="#2e2b5a"/><rect x="1" y="13" width="2" height="2" fill="#f2f4fa"/><rect x="0" y="12" width="2" height="2" fill="#2e2b5a"/></svg>
<svg style="left:1993px;top:126px;" width="4" height="16" viewBox="0 0 4 16"><rect x="1" y="1" width="2" height="2" fill="#f2f4fa"/><rect x="0" y="0" width="2" height="2" fill="#2e2b5a"/><rect x="1" y="5" width="2" height="2" fill="#f2f4fa"/><rect x="0" y="4" width="2" height="2" fill="#2e2b5a"/><rect x="1" y="9" width="2" height="2" fill="#f2f4fa"/><rect x="0" y="8" width="2" height="2" fill="#2e2b5a"/><rect x="1" y="13" width="2" height="2" fill="#f2f4fa"/><rect x="0" y="12" width="2" height="2" fill="#2e2b5a"/></svg>
<svg style="left:2207px;top:126px;" width="4" height="16" viewBox="0 0 4 16"><rect x="1" y="1" width="2" height="2" fill="#f2f4fa"/><rect x="0" y="0" width="2" height="2" fill="#2e2b5a"/><rect x="1" y="5" width="2" height="2" fill="#f2f4fa"/><rect x="0" y="4" width="2" height="2" fill="#2e2b5a"/><rect x="1" y="9" width="2" height="2" fill="#f2f4fa"/><rect x="0" y="8" width="2" height="2" fill="#2e2b5a"/><rect x="1" y="13" width="2" height="2" fill="#f2f4fa"/><rect x="0" y="12" width="2" height="2" fill="#2e2b5a"/></svg>
<svg style="left:50px;top:163px;" width="4" height="16" viewBox="0 0 4 16"><rect x="1" y="1" width="2" height="2" fill="#f2f4fa"/><rect x="0" y="0" width="2" height="2" fill="#2e2b5a"/><rect x="1" y="5" width="2" height="2" fill="#f2f4fa"/><rect x="0" y="4" width="2" height="2" fill="#2e2b5a"/><rect x="1" y="9" width="2" height="2" fill="#f2f4fa"/><rect x="0" y="8" width="2" height="2" fill="#2e2b5a"/><rect x="1" y="13" width="2" height="2" fill="#f2f4fa"/><rect x="0" y="12" width="2" height="2" fill="#2e2b5a"/></svg>
<svg style="left:64.0px;top:163.0px;" width="16" height="16" viewBox="0 0 16 16"><path d="M2 0.4h3.6l2.1 1.8 2.1-1.8h3.6v8.4l-5.7 1.4L2 8.8z" fill="#7fb2e0"/><path d="M0.7 1.6v8.9h5.6" stroke="#0b2f63" stroke-width="1.4" fill="none"/><path d="M0.7 10.5l6.4-1.2" stroke="#0b2f63" stroke-width="1.2"/><path d="M7.7 2.4v5M14.5 1.6v5" stroke="#0b2f63" stroke-width="1.3"/><circle cx="11.2" cy="11" r="5" fill="#fff"/><path d="M12.70 11.00L15.60 11.00M12.26 12.06L14.31 14.11M11.20 12.50L11.20 15.40M10.14 12.06L8.09 14.11M9.70 11.00L6.80 11.00M10.14 9.94L8.09 7.89M11.20 9.50L11.20 6.60M12.26 9.94L14.31 7.89" stroke="#0b2f63" stroke-width="1.7"/><circle cx="11.2" cy="11" r="2.9" fill="#0b2f63"/><circle cx="11.2" cy="11" r="1.25" fill="#fff"/></svg>
<div style="left:91px;top:158px;width:146px;height:29px;background:#fff;border:1px solid #dde1ee;"></div><div style="left:212px;top:159px;width:24px;height:27px;background:#e6e9f3;"></div><svg style="left:219px;top:169px;" width="10" height="6" viewBox="0 0 10 6"><path d="M0.5 0.5h9L5 5.5z" fill="#12207c"/></svg><div style="left:94.8px;top:164.0px;line-height:20px;font-size:15.65px;color:#000;white-space:nowrap;">HTML</div>
<svg style="left:246.6px;top:163.0px;" width="16" height="16" viewBox="0 0 16 16"><path d="M2 0.4h3.6l2.1 1.8 2.1-1.8h3.6v8.4l-5.7 1.4L2 8.8z" fill="#7fb2e0"/><path d="M0.7 1.6v8.9h5.6" stroke="#0b2f63" stroke-width="1.4" fill="none"/><path d="M0.7 10.5l6.4-1.2" stroke="#0b2f63" stroke-width="1.2"/><path d="M7.7 2.4v5M14.5 1.6v5" stroke="#0b2f63" stroke-width="1.3"/><circle cx="11.2" cy="11" r="5" fill="#fff"/><path d="M11.2 7.2v5" stroke="#0b2f63" stroke-width="1.7"/><path d="M8.2 11h6l-3 3.4z" fill="#0b2f63"/></svg>
<svg style="left:278px;top:163px;" width="4" height="16" viewBox="0 0 4 16"><rect x="1" y="1" width="2" height="2" fill="#f2f4fa"/><rect x="0" y="0" width="2" height="2" fill="#2e2b5a"/><rect x="1" y="5" width="2" height="2" fill="#f2f4fa"/><rect x="0" y="4" width="2" height="2" fill="#2e2b5a"/><rect x="1" y="9" width="2" height="2" fill="#f2f4fa"/><rect x="0" y="8" width="2" height="2" fill="#2e2b5a"/><rect x="1" y="13" width="2" height="2" fill="#f2f4fa"/><rect x="0" y="12" width="2" height="2" fill="#2e2b5a"/></svg>
<svg style="left:293.5px;top:163.0px;" width="16" height="16" viewBox="0 0 16 16"><path d="M0.3 2.5h3.8M5.3 2.5h0.8M7.2 2.5h3.8M1.3 4.5h5.8M8.3 4.5h4M2.3 6.5h4M12 6.5h1M2.3 8.5h1.8M1.3 10.5h2.3M0.3 12.5h3.8" stroke="#2563b4" stroke-width="1.1" fill="none" /><circle cx="9.4" cy="11.2" r="5" fill="#fff"/><path d="M10.90 11.20L13.80 11.20M10.46 12.26L12.51 14.31M9.40 12.70L9.40 15.60M8.34 12.26L6.29 14.31M7.90 11.20L5.00 11.20M8.34 10.14L6.29 8.09M9.40 9.70L9.40 6.80M10.46 10.14L12.51 8.09" stroke="#0b2f63" stroke-width="1.7"/><circle cx="9.4" cy="11.2" r="2.9" fill="#0b2f63"/><circle cx="9.4" cy="11.2" r="1.25" fill="#fff"/></svg>
<div style="left:319px;top:158px;width:146px;height:29px;background:#fff;border:1px solid #dde1ee;"></div><div style="left:440px;top:159px;width:24px;height:27px;background:#e6e9f3;"></div><svg style="left:447px;top:169px;" width="10" height="6" viewBox="0 0 10 6"><path d="M0.5 0.5h9L5 5.5z" fill="#12207c"/></svg><div style="left:322.4px;top:164.0px;line-height:20px;font-size:15.4px;color:#000;white-space:nowrap;letter-spacing:-1.286px;">KCG</div>
<svg style="left:477.0px;top:163.0px;" width="16" height="16" viewBox="0 0 16 16"><path d="M0.3 2.5h3.8M5.3 2.5h0.8M7.2 2.5h3.8M1.3 4.5h5.8M8.3 4.5h4M2.3 6.5h5M8.5 6.5h4M2.3 8.5h3M6.5 8.5h4M1.3 10.5h4M0.3 12.5h3.8" stroke="#8ca0c4" stroke-width="1.1" fill="none" /><path d="M5.5 11l3 3.2 6.5-7.2" stroke="#dc8c9c" stroke-width="1.7" fill="none" /></svg>
<svg style="left:510.0px;top:163.0px;" width="16" height="16" viewBox="0 0 16 16"><path d="M0.3 2.5h3.8M5.3 2.5h0.8M7.2 2.5h3.8M1.3 4.5h5.8M8.3 4.5h4M2.3 6.5h4M12 6.5h1M2.3 8.5h1.8M1.3 10.5h2.3M0.3 12.5h3.8" stroke="#2563b4" stroke-width="1.1" fill="none" /><circle cx="9.4" cy="11.2" r="5" fill="#fff"/><path d="M9.4 7.4v5" stroke="#0b2f63" stroke-width="1.7"/><path d="M6.4 11.2h6l-3 3.4z" fill="#0b2f63"/></svg>
<svg style="left:543.0px;top:163.0px;" width="16" height="16" viewBox="0 0 16 16"><path d="M0.3 2.5h3.8M5.3 2.5h0.8M7.2 2.5h3.8M1.3 4.5h5.8M8.3 4.5h4M2.3 6.5h4M12 6.5h1M2.3 8.5h1.8M1.3 10.5h2.3M0.3 12.5h3.8" stroke="#8ca0c4" stroke-width="1.1" fill="none" /><circle cx="9.6" cy="11.2" r="5" fill="#d9dde9"/><rect x="6.6" y="8.2" width="6" height="6" rx="0" stroke="none" stroke-width="0" fill="#8a9abb" /><rect x="8.6" y="10.2" width="2" height="2" rx="0" stroke="none" stroke-width="0" fill="#e6e9f1" /></svg>
<svg style="left:576.0px;top:163.0px;" width="16" height="16" viewBox="0 0 16 16"><path d="M0.3 2.5h3.8M5.3 2.5h0.8M7.2 2.5h3.8M1.3 4.5h5.8M8.3 4.5h4M2.3 6.5h4M12 6.5h1M2.3 8.5h1.8M1.3 10.5h2.3M0.3 12.5h3.8" stroke="#8ca0c4" stroke-width="1.1" fill="none" /><circle cx="9.6" cy="11.2" r="5.3" fill="#cfd4e2" stroke="#e07a8a" stroke-width="1.1" stroke-dasharray="7 2"/><rect x="6.6" y="8.2" width="6" height="6" rx="0" stroke="none" stroke-width="0" fill="#8a9abb" /><rect x="8.6" y="10.2" width="2" height="2" rx="0" stroke="none" stroke-width="0" fill="#e6e9f1" /></svg>
<svg style="left:609.0px;top:163.0px;" width="16" height="16" viewBox="0 0 16 16"><path d="M0.3 2.5h3.8M5.3 2.5h0.8M7.2 2.5h3.8M1.3 4.5h5.8M8.3 4.5h4M2.3 6.5h5M8.5 6.5h4M2.3 8.5h1.8M1.3 10.5h2.3M0.3 12.5h3.8" stroke="#8ca0c4" stroke-width="1.1" fill="none" /><circle cx="9.6" cy="11.2" r="5" fill="#d9dde9"/><path d="M7.2 8.8l4.8 4.8M12 8.8l-4.8 4.8" stroke="#dc7a8c" stroke-width="1.6" fill="none" /></svg>
<svg style="left:642.0px;top:163.0px;" width="16" height="16" viewBox="0 0 16 16"><path d="M0.3 2.5h3.8M5.3 2.5h0.8M7.2 2.5h3.8M1.3 4.5h5.8M8.3 4.5h4M2.3 6.5h4M12 6.5h1M2.3 8.5h1.8M1.3 10.5h2.3M0.3 12.5h3.8" stroke="#8ca0c4" stroke-width="1.1" fill="none" /><circle cx="9.6" cy="11.2" r="5" fill="#d9dde9"/><path d="M6 7.5l5 5" stroke="#8a9abb" stroke-width="2.4" fill="none" /><path d="M13.6 15l-5.4-1.2 4.2-4.2z" fill="#8a9abb"/></svg>
<div style="left:668px;top:162px;width:2px;height:21px;background:linear-gradient(90deg,#7a7592 0 50%,#eceef6 50% 100%);"></div>
<!-- leftpanel -->
<svg width="0" height="0" style="left:0;top:0"><defs><linearGradient id="exg" x1="0" y1="0" x2="0" y2="1"><stop offset="0" stop-color="#fff"/><stop offset=".5" stop-color="#f4f4f4"/><stop offset=".55" stop-color="#e4e4e4"/><stop offset="1" stop-color="#dcdcdc"/></linearGradient></defs></svg>
<div style="left:3px;top:191px;width:354px;height:32px;background:#b4bcd4;"></div>
<div style="left:6.6px;top:196.6px;line-height:20px;font-size:15.41px;color:#2359ad;white-space:nowrap;">Scade</div>
<svg style="left:339.0px;top:200.3px;" width="13" height="13" viewBox="0 0 13 13"><path d="M1 1l10.7 10.7M11.7 1L1 11.7" stroke="#00126e" stroke-width="2.3"/></svg><svg style="left:317.2px;top:200.0px;" width="13" height="14" viewBox="0 0 13 14"><path d="M3.5 1h6v7.5M3.5 1v7.5" stroke="#00126e" stroke-width="1.6" fill="none"/><rect x="7.2" y="1" width="2.6" height="7.5" fill="#00126e"/><path d="M0.5 8.6h12" stroke="#00126e" stroke-width="1.7"/><path d="M6.5 9v4.5" stroke="#00126e" stroke-width="1.7"/></svg><svg style="left:294.9px;top:203.3px;" width="15" height="10" viewBox="0 0 15 10"><path d="M0.3 0.3h14L7.3 9.3z" fill="#00126e"/></svg>
<div style="left:4px;top:226px;width:353px;height:36px;background:#cbd0e0;"></div>
<div style="left:9px;top:230px;width:308px;height:29px;background:#fff;"></div>
<div style="left:292px;top:231px;width:25px;height:27px;background:#e6e9f3;"></div>
<svg style="left:299px;top:241.5px;" width="10" height="6" viewBox="0 0 10 6"><path d="M0.5 0.5h9L5 5.5z" fill="#12207c"/></svg>
<svg style="left:328px;top:237px;" width="14" height="14" viewBox="0 0 14 14"><path d="M1 1l12 12M13 1L1 13" stroke="#8a9abb" stroke-width="1.8"/></svg>
<div style="left:4px;top:262px;width:353px;height:747px;background:#fff;border:2px solid #cdd4e2;border-left-width:1px;border-top:0;border-bottom:1px solid #6a7590;"></div>
<div style="left:13px;top:281px;width:1px;height:631px;border-left:1px dotted #9c9c9c;"></div>
<div style="left:13px;top:912px;width:23px;height:1px;border-top:1px dotted #9c9c9c;"></div>
<div style="left:43px;top:281px;width:1px;height:609px;border-left:1px dotted #9c9c9c;"></div>
<div style="left:73px;top:304px;width:1px;height:344px;border-left:1px dotted #9c9c9c;"></div>
<div style="left:103px;top:326px;width:1px;height:14px;border-left:1px dotted #9c9c9c;"></div>
<div style="left:103px;top:480px;width:1px;height:14px;border-left:1px dotted #9c9c9c;"></div>
<div style="left:103px;top:656px;width:1px;height:14px;border-left:1px dotted #9c9c9c;"></div>
<div style="left:133px;top:347px;width:1px;height:81px;border-left:1px dotted #9c9c9c;"></div>
<div style="left:133px;top:501px;width:1px;height:125px;border-left:1px dotted #9c9c9c;"></div>
<div style="left:133px;top:677px;width:1px;height:15px;border-left:1px dotted #9c9c9c;"></div>
<div style="left:20px;top:274px;width:16px;height:1px;border-top:1px dotted #9c9c9c;"></div>
<svg style="left:7px;top:267.5px;" width="13" height="13" viewBox="0 0 13 13"><rect x="0.5" y="0.5" width="12" height="12" rx="1.2" fill="url(#exg)" stroke="#969696"/><path d="M2 6.5h9" stroke="#4458ae" stroke-width="1.1"/></svg>
<svg style="left:37px;top:266px;" width="14" height="16" viewBox="0 0 14 16"><path d="M0.6 3.5v10h8.4" stroke="#2a6cc4" stroke-width="1.2" fill="#fff"/><path d="M3.5 0.6h5.5l3.9 3.9v7.9H3.5z" fill="#fff" stroke="#2a6cc4" stroke-width="1.2"/><path d="M9 0.6v3.9h3.9z" fill="#2a6cc4"/><path d="M5.5 6.5h5M5.5 8.5h5M5.5 10.5h5" stroke="#2a6cc4" stroke-width="1"/></svg>
<div style="left:60px;top:263.5px;line-height:20px;font-size:16px;color:#000;white-space:nowrap;font-weight:bold;letter-spacing:0.305px;">CruiseControl.etp</div>
<div style="left:50px;top:296px;width:16px;height:1px;border-top:1px dotted #9c9c9c;"></div>
<svg style="left:37px;top:289.5px;" width="13" height="13" viewBox="0 0 13 13"><rect x="0.5" y="0.5" width="12" height="12" rx="1.2" fill="url(#exg)" stroke="#969696"/><path d="M2 6.5h9" stroke="#4458ae" stroke-width="1.1"/></svg>
<svg style="left:65px;top:287px;" width="16" height="16" viewBox="0 0 16 16"><rect x="0.6" y="0.6" width="14.8" height="14.8" fill="#fff" stroke="#17356b" stroke-width="1.2"/><rect x="4.5" y="4.7" width="7" height="6.8" fill="#5b9bd5" stroke="#17356b" stroke-width="1.1"/><path d="M2.3 6.2h2.2M2.3 10h2.2M11.5 8h2.4" stroke="#17356b" stroke-width="1"/><path d="M12.6 6.6l1.6 1.4-1.6 1.4z" fill="#17356b"/></svg>
<div style="left:90px;top:285.5px;line-height:20px;font-size:16px;color:#000;white-space:nowrap;letter-spacing:-0.13px;">CruiseControl</div>
<div style="left:80px;top:318px;width:16px;height:1px;border-top:1px dotted #9c9c9c;"></div>
<svg style="left:67px;top:311.5px;" width="13" height="13" viewBox="0 0 13 13"><rect x="0.5" y="0.5" width="12" height="12" rx="1.2" fill="url(#exg)" stroke="#969696"/><path d="M2 6.5h9" stroke="#4458ae" stroke-width="1.1"/></svg>
<svg style="left:95.5px;top:309px;" width="15" height="15" viewBox="0 0 15 15.5"><path d="M7.5 0.5l6.8 3.4v7.6L7.5 15 0.7 11.5V3.9z" fill="#727272"/><path d="M7.5 0.5l6.8 3.4-6.8 3.4L0.7 3.9z" fill="#8c8c8c"/><path d="M7.5 7.3V15l6.8-3.5V3.9z" fill="#7b7b7b"/><path d="M0.7 3.9l6.8 3.4 6.8-3.4M7.5 7.3V15" stroke="#d8d8d8" stroke-width="1" fill="none"/></svg>
<div style="left:120px;top:307.5px;line-height:20px;font-size:16px;color:#000;white-space:nowrap;letter-spacing:-0.13px;">CC</div>
<div style="left:110px;top:340px;width:16px;height:1px;border-top:1px dotted #9c9c9c;"></div>
<svg style="left:97px;top:333.5px;" width="13" height="13" viewBox="0 0 13 13"><rect x="0.5" y="0.5" width="12" height="12" rx="1.2" fill="url(#exg)" stroke="#969696"/><path d="M2 6.5h9" stroke="#4458ae" stroke-width="1.1"/></svg>
<svg style="left:125px;top:331px;" width="16" height="16" viewBox="0 0 16 16"><path d="M2.6 12.5V2.5h4.2l1.5 2h6.2v3" fill="#fff" stroke="#2a6cc4" stroke-width="1.2"/><path d="M0.8 7.5h12.8l1.6 5.5H2.6z" fill="#79b0e6" stroke="#2a6cc4" stroke-width="1.2" stroke-linejoin="round"/></svg>
<div style="left:150px;top:329.5px;line-height:20px;font-size:16px;color:#000;white-space:nowrap;letter-spacing:-0.13px;">Operators</div>
<div style="left:140px;top:362px;width:16px;height:1px;border-top:1px dotted #9c9c9c;"></div>
<svg style="left:127px;top:355.5px;" width="13" height="13" viewBox="0 0 13 13"><rect x="0.5" y="0.5" width="12" height="12" rx="1.2" fill="url(#exg)" stroke="#969696"/><path d="M2 6.5h9" stroke="#4458ae" stroke-width="1.1"/><path d="M6.5 2v9" stroke="#4458ae" stroke-width="1.1"/></svg>
<svg style="left:155px;top:354px;" width="16" height="16" viewBox="0 0 16 16"><rect x="2.7" y="2.2" width="10" height="10.6" fill="#bfe5e0" stroke="#17356b" stroke-width="1.3"/><path d="M0.6 4.6h2.1M0.6 10.6h2.1M12.7 7.5H16" stroke="#17356b" stroke-width="1.2"/></svg>
<div style="left:180px;top:351.5px;line-height:20px;font-size:16px;color:#000;white-space:nowrap;letter-spacing:-0.13px;">CruiseControl</div>
<div style="left:140px;top:384px;width:16px;height:1px;border-top:1px dotted #9c9c9c;"></div>
<svg style="left:127px;top:377.5px;" width="13" height="13" viewBox="0 0 13 13"><rect x="0.5" y="0.5" width="12" height="12" rx="1.2" fill="url(#exg)" stroke="#969696"/><path d="M2 6.5h9" stroke="#4458ae" stroke-width="1.1"/><path d="M6.5 2v9" stroke="#4458ae" stroke-width="1.1"/></svg>
<svg style="left:155px;top:376px;" width="16" height="16" viewBox="0 0 16 16"><rect x="2.7" y="2.2" width="10" height="10.6" fill="#bfe5e0" stroke="#17356b" stroke-width="1.3"/><path d="M0.6 4.6h2.1M0.6 10.6h2.1M12.7 7.5H16" stroke="#17356b" stroke-width="1.2"/></svg>
<div style="left:180px;top:373.5px;line-height:20px;font-size:16px;color:#000;white-space:nowrap;letter-spacing:-0.13px;">CruiseRegulation</div>
<div style="left:140px;top:406px;width:16px;height:1px;border-top:1px dotted #9c9c9c;"></div>
<svg style="left:127px;top:399.5px;" width="13" height="13" viewBox="0 0 13 13"><rect x="0.5" y="0.5" width="12" height="12" rx="1.2" fill="url(#exg)" stroke="#969696"/><path d="M2 6.5h9" stroke="#4458ae" stroke-width="1.1"/><path d="M6.5 2v9" stroke="#4458ae" stroke-width="1.1"/></svg>
<svg style="left:155px;top:398px;" width="16" height="16" viewBox="0 0 16 16"><rect x="2.7" y="2.2" width="10" height="10.6" fill="#bfe5e0" stroke="#17356b" stroke-width="1.3"/><path d="M0.6 4.6h2.1M0.6 10.6h2.1M12.7 7.5H16" stroke="#17356b" stroke-width="1.2"/></svg>
<div style="left:180px;top:395.5px;line-height:20px;font-size:16px;color:#000;white-space:nowrap;letter-spacing:-0.13px;">CruiseSpeedMgt</div>
<div style="left:140px;top:428px;width:16px;height:1px;border-top:1px dotted #9c9c9c;"></div>
<svg style="left:127px;top:421.5px;" width="13" height="13" viewBox="0 0 13 13"><rect x="0.5" y="0.5" width="12" height="12" rx="1.2" fill="url(#exg)" stroke="#969696"/><path d="M2 6.5h9" stroke="#4458ae" stroke-width="1.1"/><path d="M6.5 2v9" stroke="#4458ae" stroke-width="1.1"/></svg>
<svg style="left:155px;top:420px;" width="16" height="16" viewBox="0 0 16 16"><rect x="2.7" y="2.2" width="10" height="10.6" fill="#bfe5e0" stroke="#17356b" stroke-width="1.3"/><path d="M0.6 4.6h2.1M0.6 10.6h2.1M12.7 7.5H16" stroke="#17356b" stroke-width="1.2"/></svg>
<div style="left:180px;top:417.5px;line-height:20px;font-size:16px;color:#000;white-space:nowrap;letter-spacing:-0.13px;">SaturateThrottle</div>
<div style="left:80px;top:450px;width:16px;height:1px;border-top:1px dotted #9c9c9c;"></div>
<svg style="left:67px;top:443.5px;" width="13" height="13" viewBox="0 0 13 13"><rect x="0.5" y="0.5" width="12" height="12" rx="1.2" fill="url(#exg)" stroke="#969696"/><path d="M2 6.5h9" stroke="#4458ae" stroke-width="1.1"/><path d="M6.5 2v9" stroke="#4458ae" stroke-width="1.1"/></svg>
<svg style="left:95.5px;top:441px;" width="15" height="15" viewBox="0 0 15 15.5"><path d="M7.5 0.5l6.8 3.4v7.6L7.5 15 0.7 11.5V3.9z" fill="#727272"/><path d="M7.5 0.5l6.8 3.4-6.8 3.4L0.7 3.9z" fill="#8c8c8c"/><path d="M7.5 7.3V15l6.8-3.5V3.9z" fill="#7b7b7b"/><path d="M0.7 3.9l6.8 3.4 6.8-3.4M7.5 7.3V15" stroke="#d8d8d8" stroke-width="1" fill="none"/></svg>
<div style="left:120px;top:439.5px;line-height:20px;font-size:16px;color:#000;white-space:nowrap;letter-spacing:-0.13px;">Defs</div>
<div style="left:80px;top:472px;width:16px;height:1px;border-top:1px dotted #9c9c9c;"></div>
<svg style="left:67px;top:465.5px;" width="13" height="13" viewBox="0 0 13 13"><rect x="0.5" y="0.5" width="12" height="12" rx="1.2" fill="url(#exg)" stroke="#969696"/><path d="M2 6.5h9" stroke="#4458ae" stroke-width="1.1"/></svg>
<svg style="left:95.5px;top:463px;" width="15" height="15" viewBox="0 0 15 15.5"><path d="M7.5 0.5l6.8 3.4v7.6L7.5 15 0.7 11.5V3.9z" fill="#727272"/><path d="M7.5 0.5l6.8 3.4-6.8 3.4L0.7 3.9z" fill="#8c8c8c"/><path d="M7.5 7.3V15l6.8-3.5V3.9z" fill="#7b7b7b"/><path d="M0.7 3.9l6.8 3.4 6.8-3.4M7.5 7.3V15" stroke="#d8d8d8" stroke-width="1" fill="none"/></svg>
<div style="left:120px;top:461.5px;line-height:20px;font-size:16px;color:#000;white-space:nowrap;letter-spacing:-0.13px;">Proof</div>
<div style="left:110px;top:494px;width:16px;height:1px;border-top:1px dotted #9c9c9c;"></div>
<svg style="left:97px;top:487.5px;" width="13" height="13" viewBox="0 0 13 13"><rect x="0.5" y="0.5" width="12" height="12" rx="1.2" fill="url(#exg)" stroke="#969696"/><path d="M2 6.5h9" stroke="#4458ae" stroke-width="1.1"/></svg>
<svg style="left:125px;top:485px;" width="16" height="16" viewBox="0 0 16 16"><path d="M2.6 12.5V2.5h4.2l1.5 2h6.2v3" fill="#fff" stroke="#2a6cc4" stroke-width="1.2"/><path d="M0.8 7.5h12.8l1.6 5.5H2.6z" fill="#79b0e6" stroke="#2a6cc4" stroke-width="1.2" stroke-linejoin="round"/></svg>
<div style="left:150px;top:483.5px;line-height:20px;font-size:16px;color:#000;white-space:nowrap;letter-spacing:-0.13px;">Operators</div>
<div style="left:140px;top:516px;width:16px;height:1px;border-top:1px dotted #9c9c9c;"></div>
<svg style="left:127px;top:509.5px;" width="13" height="13" viewBox="0 0 13 13"><rect x="0.5" y="0.5" width="12" height="12" rx="1.2" fill="url(#exg)" stroke="#969696"/><path d="M2 6.5h9" stroke="#4458ae" stroke-width="1.1"/><path d="M6.5 2v9" stroke="#4458ae" stroke-width="1.1"/></svg>
<svg style="left:155px;top:508px;" width="16" height="16" viewBox="0 0 16 16"><rect x="2.7" y="2.2" width="10" height="10.6" fill="#bfe5e0" stroke="#17356b" stroke-width="1.3"/><path d="M0.6 4.6h2.1M0.6 10.6h2.1M12.7 7.5H16" stroke="#17356b" stroke-width="1.2"/></svg>
<div style="left:180px;top:505.5px;line-height:20px;font-size:16px;color:#000;white-space:nowrap;letter-spacing:-0.13px;">Proof</div>
<div style="left:140px;top:538px;width:16px;height:1px;border-top:1px dotted #9c9c9c;"></div>
<svg style="left:127px;top:531.5px;" width="13" height="13" viewBox="0 0 13 13"><rect x="0.5" y="0.5" width="12" height="12" rx="1.2" fill="url(#exg)" stroke="#969696"/><path d="M2 6.5h9" stroke="#4458ae" stroke-width="1.1"/><path d="M6.5 2v9" stroke="#4458ae" stroke-width="1.1"/></svg>
<svg style="left:155px;top:530px;" width="16" height="16" viewBox="0 0 16 16"><rect x="2.7" y="2.2" width="10" height="10.6" fill="#bfe5e0" stroke="#17356b" stroke-width="1.3"/><path d="M0.6 4.6h2.1M0.6 10.6h2.1M12.7 7.5H16" stroke="#17356b" stroke-width="1.2"/></svg>
<div style="left:180px;top:527.5px;line-height:20px;font-size:16px;color:#000;white-space:nowrap;letter-spacing:-0.13px;">Prop1</div>
<div style="left:140px;top:560px;width:16px;height:1px;border-top:1px dotted #9c9c9c;"></div>
<svg style="left:127px;top:553.5px;" width="13" height="13" viewBox="0 0 13 13"><rect x="0.5" y="0.5" width="12" height="12" rx="1.2" fill="url(#exg)" stroke="#969696"/><path d="M2 6.5h9" stroke="#4458ae" stroke-width="1.1"/><path d="M6.5 2v9" stroke="#4458ae" stroke-width="1.1"/></svg>
<svg style="left:155px;top:552px;" width="16" height="16" viewBox="0 0 16 16"><rect x="2.7" y="2.2" width="10" height="10.6" fill="#bfe5e0" stroke="#17356b" stroke-width="1.3"/><path d="M0.6 4.6h2.1M0.6 10.6h2.1M12.7 7.5H16" stroke="#17356b" stroke-width="1.2"/></svg>
<div style="left:180px;top:549.5px;line-height:20px;font-size:16px;color:#000;white-space:nowrap;letter-spacing:-0.13px;">Prop2</div>
<div style="left:140px;top:582px;width:16px;height:1px;border-top:1px dotted #9c9c9c;"></div>
<svg style="left:127px;top:575.5px;" width="13" height="13" viewBox="0 0 13 13"><rect x="0.5" y="0.5" width="12" height="12" rx="1.2" fill="url(#exg)" stroke="#969696"/><path d="M2 6.5h9" stroke="#4458ae" stroke-width="1.1"/><path d="M6.5 2v9" stroke="#4458ae" stroke-width="1.1"/></svg>
<svg style="left:155px;top:574px;" width="16" height="16" viewBox="0 0 16 16"><rect x="2.7" y="2.2" width="10" height="10.6" fill="#bfe5e0" stroke="#17356b" stroke-width="1.3"/><path d="M0.6 4.6h2.1M0.6 10.6h2.1M12.7 7.5H16" stroke="#17356b" stroke-width="1.2"/></svg>
<div style="left:180px;top:571.5px;line-height:20px;font-size:16px;color:#000;white-space:nowrap;letter-spacing:-0.13px;">Prop3</div>
<div style="left:140px;top:604px;width:16px;height:1px;border-top:1px dotted #9c9c9c;"></div>
<svg style="left:127px;top:597.5px;" width="13" height="13" viewBox="0 0 13 13"><rect x="0.5" y="0.5" width="12" height="12" rx="1.2" fill="url(#exg)" stroke="#969696"/><path d="M2 6.5h9" stroke="#4458ae" stroke-width="1.1"/><path d="M6.5 2v9" stroke="#4458ae" stroke-width="1.1"/></svg>
<svg style="left:155px;top:596px;" width="16" height="16" viewBox="0 0 16 16"><rect x="2.7" y="2.2" width="10" height="10.6" fill="#bfe5e0" stroke="#17356b" stroke-width="1.3"/><path d="M0.6 4.6h2.1M0.6 10.6h2.1M12.7 7.5H16" stroke="#17356b" stroke-width="1.2"/></svg>
<div style="left:180px;top:593.5px;line-height:20px;font-size:16px;color:#000;white-space:nowrap;letter-spacing:-0.13px;">Prop4</div>
<div style="left:140px;top:626px;width:16px;height:1px;border-top:1px dotted #9c9c9c;"></div>
<svg style="left:127px;top:619.5px;" width="13" height="13" viewBox="0 0 13 13"><rect x="0.5" y="0.5" width="12" height="12" rx="1.2" fill="url(#exg)" stroke="#969696"/><path d="M2 6.5h9" stroke="#4458ae" stroke-width="1.1"/><path d="M6.5 2v9" stroke="#4458ae" stroke-width="1.1"/></svg>
<svg style="left:155px;top:618px;" width="16" height="16" viewBox="0 0 16 16"><rect x="2.7" y="2.2" width="10" height="10.6" fill="#bfe5e0" stroke="#17356b" stroke-width="1.3"/><path d="M0.6 4.6h2.1M0.6 10.6h2.1M12.7 7.5H16" stroke="#17356b" stroke-width="1.2"/></svg>
<div style="left:180px;top:615.5px;line-height:20px;font-size:16px;color:#000;white-space:nowrap;letter-spacing:-0.13px;">Prop5</div>
<div style="left:80px;top:648px;width:16px;height:1px;border-top:1px dotted #9c9c9c;"></div>
<svg style="left:67px;top:641.5px;" width="13" height="13" viewBox="0 0 13 13"><rect x="0.5" y="0.5" width="12" height="12" rx="1.2" fill="url(#exg)" stroke="#969696"/><path d="M2 6.5h9" stroke="#4458ae" stroke-width="1.1"/></svg>
<svg style="left:95.5px;top:639px;" width="15" height="15" viewBox="0 0 15 15.5"><path d="M7.5 0.5l6.8 3.4v7.6L7.5 15 0.7 11.5V3.9z" fill="#727272"/><path d="M7.5 0.5l6.8 3.4-6.8 3.4L0.7 3.9z" fill="#8c8c8c"/><path d="M7.5 7.3V15l6.8-3.5V3.9z" fill="#7b7b7b"/><path d="M0.7 3.9l6.8 3.4 6.8-3.4M7.5 7.3V15" stroke="#d8d8d8" stroke-width="1" fill="none"/></svg>
<div style="left:120px;top:637.5px;line-height:20px;font-size:16px;color:#000;white-space:nowrap;letter-spacing:-0.13px;">System</div>
<div style="left:110px;top:670px;width:16px;height:1px;border-top:1px dotted #9c9c9c;"></div>
<svg style="left:97px;top:663.5px;" width="13" height="13" viewBox="0 0 13 13"><rect x="0.5" y="0.5" width="12" height="12" rx="1.2" fill="url(#exg)" stroke="#969696"/><path d="M2 6.5h9" stroke="#4458ae" stroke-width="1.1"/></svg>
<svg style="left:125px;top:661px;" width="16" height="16" viewBox="0 0 16 16"><path d="M2.6 12.5V2.5h4.2l1.5 2h6.2v3" fill="#fff" stroke="#2a6cc4" stroke-width="1.2"/><path d="M0.8 7.5h12.8l1.6 5.5H2.6z" fill="#79b0e6" stroke="#2a6cc4" stroke-width="1.2" stroke-linejoin="round"/></svg>
<div style="left:150px;top:659.5px;line-height:20px;font-size:16px;color:#000;white-space:nowrap;letter-spacing:-0.13px;">Operators</div>
<div style="left:140px;top:692px;width:16px;height:1px;border-top:1px dotted #9c9c9c;"></div>
<svg style="left:127px;top:685.5px;" width="13" height="13" viewBox="0 0 13 13"><rect x="0.5" y="0.5" width="12" height="12" rx="1.2" fill="url(#exg)" stroke="#969696"/><path d="M2 6.5h9" stroke="#4458ae" stroke-width="1.1"/><path d="M6.5 2v9" stroke="#4458ae" stroke-width="1.1"/></svg>
<svg style="left:155px;top:684px;" width="16" height="16" viewBox="0 0 16 16"><rect x="2.7" y="2.2" width="10" height="10.6" fill="#bfe5e0" stroke="#17356b" stroke-width="1.3"/><path d="M0.6 4.6h2.1M0.6 10.6h2.1M12.7 7.5H16" stroke="#17356b" stroke-width="1.2"/></svg>
<div style="left:180px;top:681.5px;line-height:20px;font-size:16px;color:#000;white-space:nowrap;letter-spacing:-0.13px;">SystemSimul</div>
<div style="left:50px;top:714px;width:16px;height:1px;border-top:1px dotted #9c9c9c;"></div>
<svg style="left:37px;top:707.5px;" width="13" height="13" viewBox="0 0 13 13"><rect x="0.5" y="0.5" width="12" height="12" rx="1.2" fill="url(#exg)" stroke="#969696"/><path d="M2 6.5h9" stroke="#4458ae" stroke-width="1.1"/><path d="M6.5 2v9" stroke="#4458ae" stroke-width="1.1"/></svg>
<svg style="left:65px;top:705px;" width="16" height="16" viewBox="0 0 16 16"><rect x="0.6" y="0.6" width="14.8" height="14.8" fill="#fff" stroke="#17356b" stroke-width="1.2"/><rect x="4.5" y="4.7" width="7" height="6.8" fill="#5b9bd5" stroke="#17356b" stroke-width="1.1"/><path d="M2.3 6.2h2.2M2.3 10h2.2M11.5 8h2.4" stroke="#17356b" stroke-width="1"/><path d="M12.6 6.6l1.6 1.4-1.6 1.4z" fill="#17356b"/></svg>
<div style="left:90px;top:703.5px;line-height:20px;font-size:16px;color:#000;white-space:nowrap;letter-spacing:-0.13px;">Car</div>
<div style="left:50px;top:736px;width:16px;height:1px;border-top:1px dotted #9c9c9c;"></div>
<svg style="left:37px;top:729.5px;" width="13" height="13" viewBox="0 0 13 13"><rect x="0.5" y="0.5" width="12" height="12" rx="1.2" fill="url(#exg)" stroke="#969696"/><path d="M2 6.5h9" stroke="#4458ae" stroke-width="1.1"/><path d="M6.5 2v9" stroke="#4458ae" stroke-width="1.1"/></svg>
<svg style="left:65px;top:727px;" width="16" height="16" viewBox="0 0 16 16"><rect x="0.6" y="0.6" width="14.8" height="14.8" fill="#fff" stroke="#17356b" stroke-width="1.2"/><rect x="4.5" y="4.7" width="7" height="6.8" fill="#5b9bd5" stroke="#17356b" stroke-width="1.1"/><path d="M2.3 6.2h2.2M2.3 10h2.2M11.5 8h2.4" stroke="#17356b" stroke-width="1"/><path d="M12.6 6.6l1.6 1.4-1.6 1.4z" fill="#17356b"/></svg>
<div style="left:90px;top:725.5px;line-height:20px;font-size:16px;color:#000;white-space:nowrap;letter-spacing:-0.13px;">CarType</div>
<div style="left:50px;top:758px;width:16px;height:1px;border-top:1px dotted #9c9c9c;"></div>
<svg style="left:37px;top:751.5px;" width="13" height="13" viewBox="0 0 13 13"><rect x="0.5" y="0.5" width="12" height="12" rx="1.2" fill="url(#exg)" stroke="#969696"/><path d="M2 6.5h9" stroke="#4458ae" stroke-width="1.1"/><path d="M6.5 2v9" stroke="#4458ae" stroke-width="1.1"/></svg>
<svg style="left:65px;top:749px;" width="16" height="16" viewBox="0 0 16 16"><rect x="0.6" y="0.6" width="14.8" height="14.8" fill="#fff" stroke="#17356b" stroke-width="1.2"/><rect x="4.5" y="4.7" width="7" height="6.8" fill="#5b9bd5" stroke="#17356b" stroke-width="1.1"/><path d="M2.3 6.2h2.2M2.3 10h2.2M11.5 8h2.4" stroke="#17356b" stroke-width="1"/><path d="M12.6 6.6l1.6 1.4-1.6 1.4z" fill="#17356b"/></svg>
<div style="left:90px;top:747.5px;line-height:20px;font-size:16px;color:#000;white-space:nowrap;letter-spacing:-0.13px;">libcomp</div>
<div style="left:50px;top:780px;width:16px;height:1px;border-top:1px dotted #9c9c9c;"></div>
<svg style="left:37px;top:773.5px;" width="13" height="13" viewBox="0 0 13 13"><rect x="0.5" y="0.5" width="12" height="12" rx="1.2" fill="url(#exg)" stroke="#969696"/><path d="M2 6.5h9" stroke="#4458ae" stroke-width="1.1"/><path d="M6.5 2v9" stroke="#4458ae" stroke-width="1.1"/></svg>
<svg style="left:65px;top:771px;" width="16" height="16" viewBox="0 0 16 16"><rect x="0.6" y="0.6" width="14.8" height="14.8" fill="#fff" stroke="#17356b" stroke-width="1.2"/><rect x="4.5" y="4.7" width="7" height="6.8" fill="#5b9bd5" stroke="#17356b" stroke-width="1.1"/><path d="M2.3 6.2h2.2M2.3 10h2.2M11.5 8h2.4" stroke="#17356b" stroke-width="1"/><path d="M12.6 6.6l1.6 1.4-1.6 1.4z" fill="#17356b"/></svg>
<div style="left:90px;top:769.5px;line-height:20px;font-size:16px;color:#000;white-space:nowrap;letter-spacing:-0.13px;">libdigital</div>
<div style="left:50px;top:802px;width:16px;height:1px;border-top:1px dotted #9c9c9c;"></div>
<svg style="left:37px;top:795.5px;" width="13" height="13" viewBox="0 0 13 13"><rect x="0.5" y="0.5" width="12" height="12" rx="1.2" fill="url(#exg)" stroke="#969696"/><path d="M2 6.5h9" stroke="#4458ae" stroke-width="1.1"/><path d="M6.5 2v9" stroke="#4458ae" stroke-width="1.1"/></svg>
<svg style="left:65px;top:793px;" width="16" height="16" viewBox="0 0 16 16"><rect x="0.6" y="0.6" width="14.8" height="14.8" fill="#fff" stroke="#17356b" stroke-width="1.2"/><rect x="4.5" y="4.7" width="7" height="6.8" fill="#5b9bd5" stroke="#17356b" stroke-width="1.1"/><path d="M2.3 6.2h2.2M2.3 10h2.2M11.5 8h2.4" stroke="#17356b" stroke-width="1"/><path d="M12.6 6.6l1.6 1.4-1.6 1.4z" fill="#17356b"/></svg>
<div style="left:90px;top:791.5px;line-height:20px;font-size:16px;color:#000;white-space:nowrap;letter-spacing:-0.13px;">liblinear</div>
<div style="left:50px;top:824px;width:16px;height:1px;border-top:1px dotted #9c9c9c;"></div>
<svg style="left:37px;top:817.5px;" width="13" height="13" viewBox="0 0 13 13"><rect x="0.5" y="0.5" width="12" height="12" rx="1.2" fill="url(#exg)" stroke="#969696"/><path d="M2 6.5h9" stroke="#4458ae" stroke-width="1.1"/><path d="M6.5 2v9" stroke="#4458ae" stroke-width="1.1"/></svg>
<svg style="left:65px;top:815px;" width="16" height="16" viewBox="0 0 16 16"><rect x="0.6" y="0.6" width="14.8" height="14.8" fill="#fff" stroke="#17356b" stroke-width="1.2"/><rect x="4.5" y="4.7" width="7" height="6.8" fill="#5b9bd5" stroke="#17356b" stroke-width="1.1"/><path d="M2.3 6.2h2.2M2.3 10h2.2M11.5 8h2.4" stroke="#17356b" stroke-width="1"/><path d="M12.6 6.6l1.6 1.4-1.6 1.4z" fill="#17356b"/></svg>
<div style="left:90px;top:813.5px;line-height:20px;font-size:16px;color:#000;white-space:nowrap;letter-spacing:-0.13px;">libmath</div>
<div style="left:50px;top:846px;width:16px;height:1px;border-top:1px dotted #9c9c9c;"></div>
<svg style="left:37px;top:839.5px;" width="13" height="13" viewBox="0 0 13 13"><rect x="0.5" y="0.5" width="12" height="12" rx="1.2" fill="url(#exg)" stroke="#969696"/><path d="M2 6.5h9" stroke="#4458ae" stroke-width="1.1"/><path d="M6.5 2v9" stroke="#4458ae" stroke-width="1.1"/></svg>
<svg style="left:65px;top:837px;" width="16" height="16" viewBox="0 0 16 16"><rect x="0.6" y="0.6" width="14.8" height="14.8" fill="#fff" stroke="#17356b" stroke-width="1.2"/><rect x="4.5" y="4.7" width="7" height="6.8" fill="#5b9bd5" stroke="#17356b" stroke-width="1.1"/><path d="M2.3 6.2h2.2M2.3 10h2.2M11.5 8h2.4" stroke="#17356b" stroke-width="1"/><path d="M12.6 6.6l1.6 1.4-1.6 1.4z" fill="#17356b"/></svg>
<div style="left:90px;top:835.5px;line-height:20px;font-size:16px;color:#000;white-space:nowrap;letter-spacing:-0.13px;">libmathext</div>
<div style="left:50px;top:868px;width:16px;height:1px;border-top:1px dotted #9c9c9c;"></div>
<svg style="left:37px;top:861.5px;" width="13" height="13" viewBox="0 0 13 13"><rect x="0.5" y="0.5" width="12" height="12" rx="1.2" fill="url(#exg)" stroke="#969696"/><path d="M2 6.5h9" stroke="#4458ae" stroke-width="1.1"/><path d="M6.5 2v9" stroke="#4458ae" stroke-width="1.1"/></svg>
<svg style="left:65px;top:859px;" width="16" height="16" viewBox="0 0 16 16"><rect x="0.6" y="0.6" width="14.8" height="14.8" fill="#fff" stroke="#17356b" stroke-width="1.2"/><rect x="4.5" y="4.7" width="7" height="6.8" fill="#5b9bd5" stroke="#17356b" stroke-width="1.1"/><path d="M2.3 6.2h2.2M2.3 10h2.2M11.5 8h2.4" stroke="#17356b" stroke-width="1"/><path d="M12.6 6.6l1.6 1.4-1.6 1.4z" fill="#17356b"/></svg>
<div style="left:90px;top:857.5px;line-height:20px;font-size:16px;color:#000;white-space:nowrap;letter-spacing:-0.13px;">libpwlinear</div>
<div style="left:50px;top:890px;width:16px;height:1px;border-top:1px dotted #9c9c9c;"></div>
<svg style="left:37px;top:883.5px;" width="13" height="13" viewBox="0 0 13 13"><rect x="0.5" y="0.5" width="12" height="12" rx="1.2" fill="url(#exg)" stroke="#969696"/><path d="M2 6.5h9" stroke="#4458ae" stroke-width="1.1"/><path d="M6.5 2v9" stroke="#4458ae" stroke-width="1.1"/></svg>
<svg style="left:65px;top:881px;" width="16" height="16" viewBox="0 0 16 16"><rect x="0.6" y="0.6" width="14.8" height="14.8" fill="#fff" stroke="#17356b" stroke-width="1.2"/><rect x="4.5" y="4.7" width="7" height="6.8" fill="#5b9bd5" stroke="#17356b" stroke-width="1.1"/><path d="M2.3 6.2h2.2M2.3 10h2.2M11.5 8h2.4" stroke="#17356b" stroke-width="1"/><path d="M12.6 6.6l1.6 1.4-1.6 1.4z" fill="#17356b"/></svg>
<div style="left:90px;top:879.5px;line-height:20px;font-size:16px;color:#000;white-space:nowrap;letter-spacing:-0.13px;">libverif</div>
<svg style="left:37px;top:904px;" width="14" height="16" viewBox="0 0 14 16"><path d="M0.6 3.5v10h8.4" stroke="#2a6cc4" stroke-width="1.2" fill="#fff"/><path d="M3.5 0.6h5.5l3.9 3.9v7.9H3.5z" fill="#fff" stroke="#2a6cc4" stroke-width="1.2"/><path d="M9 0.6v3.9h3.9z" fill="#2a6cc4"/><path d="M5.5 6.5h5M5.5 8.5h5M5.5 10.5h5" stroke="#2a6cc4" stroke-width="1"/></svg>
<div style="left:60px;top:901.5px;line-height:20px;font-size:16px;color:#000;white-space:nowrap;letter-spacing:-0.13px;">CruiseControl_Test.etp</div>
<div style="left:3px;top:1008px;width:355px;height:1px;background:#6a7590;"></div>
<div style="left:93px;top:1009px;width:83px;height:31px;background:#e8e9ee;"></div>
<div style="left:34px;top:1014.5px;line-height:21px;font-size:16.5px;color:#12207c;white-space:nowrap;letter-spacing:-0.402px;">FileVi...</div>
<div style="left:123px;top:1014.5px;line-height:21px;font-size:16.5px;color:#12207c;white-space:nowrap;letter-spacing:-0.521px;">Scade</div>
<div style="left:207.7px;top:1014.5px;line-height:21px;font-size:16.5px;color:#12207c;white-space:nowrap;letter-spacing:-0.448px;">Desig...</div>
<div style="left:296.5px;top:1014.5px;line-height:21px;font-size:16.5px;color:#12207c;white-space:nowrap;letter-spacing:-0.249px;">Test V...</div>
<svg style="left:10.5px;top:1014px;" width="11" height="13" viewBox="0 0 11 13"><path d="M0.7 0.7h6l3.6 3.6v8H0.7z" fill="#fff" stroke="#2a6cc4" stroke-width="1.3"/><path d="M6.5 0.7v3.8h3.8z" fill="#2a6cc4"/><path d="M2.7 7h5.5M2.7 9.5h5.5" stroke="#2a6cc4" stroke-width="1"/></svg>
<svg style="left:97px;top:1012px;" width="16" height="15" viewBox="0 0 16 15"><rect x="0.5" y="0.5" width="6.5" height="5" fill="#2f6db8" stroke="#17356b"/><path d="M7 3h2.5M8.4 1.8v2.4" stroke="#17356b" stroke-width="1"/><path d="M5.5 6.5h6l3.6 3v5H5.5z" fill="#fff" stroke="#2a6cc4" stroke-width="1.2"/><path d="M7.5 10h5.5M7.5 12.3h5.5" stroke="#2a6cc4" stroke-width="1"/></svg>
<svg style="left:180.5px;top:1013px;" width="16" height="16" viewBox="0 0 16 16"><circle cx="9.5" cy="6" r="5" fill="none" stroke="#17356b" stroke-width="1.5"/><path d="M7 6l2 2 3.2-3.8" stroke="#17356b" stroke-width="1.3" fill="none"/><path d="M5.8 9.8L1 14.6" stroke="#17356b" stroke-width="2.2"/></svg>
<svg style="left:271.5px;top:1012.5px;" width="13" height="14" viewBox="0 0 13 14"><rect x="0.6" y="1" width="5" height="5" fill="none" stroke="#1a7a2a" stroke-width="1.1"/><rect x="0.6" y="8.3" width="5" height="5" fill="none" stroke="#1a7a2a" stroke-width="1.1"/><path d="M1.6 3.5l1.4 1.4 3-3.4M1.6 10.8l1.4 1.4 3-3.4" stroke="#1a7a2a" stroke-width="1.2" fill="none"/><path d="M7.5 3.5h5M7.5 10.8h5" stroke="#1a7a2a" stroke-width="1.2"/></svg>
<!-- center -->
<div style="left:362px;top:190px;width:1652px;height:34px;border-top:1px solid #d2d6e4;border-right:1px solid #d2d6e4;border-left:1px solid #d2d6e4;"></div>
<svg style="left:368px;top:195px;" width="24" height="24" viewBox="0 0 24 24"><rect x="0.7" y="0.7" width="22.6" height="22.6" fill="none" stroke="#163a66" stroke-width="1.4"/><rect x="6" y="4" width="12.4" height="9" fill="#1a416f"/><text x="12.2" y="22" font-size="10" font-weight="bold" fill="#000" text-anchor="middle" textLength="18.6" lengthAdjust="spacingAndGlyphs" font-family="Liberation Sans, sans-serif">HTML</text></svg>
<div style="left:394.4px;top:197.8px;line-height:21px;font-size:16.75px;color:#12207c;white-space:nowrap;">Welcome to the SCADE Product Family</div>
<div style="left:714px;top:192px;width:221px;height:32px;background:#e8e9ef;"></div>
<svg style="left:718px;top:195px;" width="24" height="24" viewBox="0 0 24 24"><rect x="0.7" y="0.7" width="22.6" height="22.6" fill="none" stroke="#163a66" stroke-width="1.4"/><rect x="6" y="4" width="12.4" height="9" fill="#1a416f"/><text x="12.2" y="22" font-size="10" font-weight="bold" fill="#000" text-anchor="middle" textLength="18.6" lengthAdjust="spacingAndGlyphs" font-family="Liberation Sans, sans-serif">HTML</text></svg>
<div style="left:744.2px;top:198.5px;line-height:20px;font-size:16.0px;color:#0c1878;white-space:nowrap;font-weight:bold;">CruiseControl_rules</div>
<svg style="left:910.5px;top:202.5px;" width="14" height="13" viewBox="0 0 14 13"><path d="M1.2 1.2l11 10.6M12.2 1.2l-11 10.6" stroke="#0c1878" stroke-width="2.7"/></svg>
<svg style="left:1972px;top:199px;" width="10" height="14" viewBox="0 0 10 14"><path d="M8.2 1.2v11.6L1.4 7z" fill="none" stroke="#666" stroke-width="1.6"/></svg>
<svg style="left:1995px;top:199px;" width="10" height="14" viewBox="0 0 10 14"><path d="M1.8 1.2v11.6L8.6 7z" fill="none" stroke="#666" stroke-width="1.6"/></svg>
<div style="left:357px;top:191px;width:1px;height:818px;background:#b3bdca;"></div>
<div style="left:362px;top:222px;width:1652px;height:820px;background:#b5bfcc;"></div>
<div style="left:363px;top:223px;width:1650px;height:818px;background:#d0d6e4;"></div>
<div style="left:363px;top:1041px;width:1651px;height:1px;background:#b3bdca;"></div>
<div style="left:2013px;top:223px;width:1px;height:819px;background:#b3bdca;"></div>
<div style="left:365px;top:225px;width:1646px;height:814px;background:#fff;border-left:2px solid #666;border-top:2px solid #666;"></div>
<div style="left:365px;top:225px;width:1646px;height:1px;background:#a0a0a0;"></div>
<div style="left:365px;top:225px;width:1px;height:814px;background:#a0a0a0;"></div>
<div style="left:367px;top:227px;width:1620px;height:810px;overflow:hidden;"><div style="left:12.300000000000011px;top:10.0px;line-height:28px;font-size:21.95px;color:#000;white-space:nowrap;font-family:'DejaVu Sans', 'Liberation Sans', sans-serif;">Selected objects:</div><div style="left:12.300000000000011px;top:37.0px;line-height:28px;font-size:21.95px;color:#000;white-space:nowrap;font-family:'DejaVu Sans', 'Liberation Sans', sans-serif;">CruiseControl</div><div style="left:12px;top:87px;width:1596px;height:3px;background:repeating-linear-gradient(90deg,#000 0 3px,transparent 3px 6px);"></div><div style="left:12.300000000000011px;top:114.5px;line-height:41px;font-size:31.75px;color:#000;white-space:nowrap;font-family:'DejaVu Sans', 'Liberation Sans', sans-serif;font-weight:bold;">2. Results synthesis</div><div style="left:12px;top:339px;width:1596px;height:3px;background:repeating-linear-gradient(90deg,#000 0 3px,transparent 3px 6px);"></div><div style="left:12.300000000000011px;top:366.5px;line-height:41px;font-size:31.95px;color:#000;white-space:nowrap;font-family:'DejaVu Sans', 'Liberation Sans', sans-serif;font-weight:bold;">3. Overall rules checker summary</div><div style="left:12.300000000000011px;top:441.5px;line-height:36px;font-size:28.25px;color:#000;white-space:nowrap;font-family:'DejaVu Sans', 'Liberation Sans', sans-serif;">3.1. Mandatory rules summary</div><div style="left:12.300000000000011px;top:487.5px;line-height:28px;font-size:21.95px;color:#000;white-space:nowrap;font-family:'DejaVu Sans', 'Liberation Sans', sans-serif;">No Mandatory rules</div><div style="left:12.300000000000011px;top:526.5px;line-height:36px;font-size:28.25px;color:#000;white-space:nowrap;font-family:'DejaVu Sans', 'Liberation Sans', sans-serif;">3.2. Required rules summary</div><div style="left:613.6px;top:596.5px;line-height:28px;font-size:22.1px;color:#000;white-space:nowrap;font-family:'DejaVu Sans', 'Liberation Sans', sans-serif;">1 violation detected - 0 justification</div></div>
<div style="left:0px;top:227px;width:1987px;height:810px;overflow:hidden;"><div style="left:0;top:-227px;width:1987px;height:1100px;"><div style="left:379px;top:404px;width:1596px;height:28px;background:#000080;"></div><div style="left:379px;top:404px;width:1px;height:114px;background:#000;"></div><div style="left:1038px;top:404px;width:1px;height:114px;background:#000;"></div><div style="left:1400px;top:404px;width:1px;height:114px;background:#000;"></div><div style="left:1666px;top:404px;width:1px;height:114px;background:#000;"></div><div style="left:1974px;top:404px;width:1px;height:114px;background:#000;"></div><div style="left:379px;top:404px;width:1596px;height:1px;background:#000;"></div><div style="left:379px;top:432px;width:1596px;height:1px;background:#000;"></div><div style="left:379px;top:461px;width:1596px;height:1px;background:#000;"></div><div style="left:379px;top:489px;width:1596px;height:1px;background:#000;"></div><div style="left:379px;top:517px;width:1596px;height:1px;background:#000;"></div><div style="left:680.8px;top:407.5px;line-height:23px;font-size:18.2px;color:#fff;white-space:nowrap;font-family:'DejaVu Sans', 'Liberation Sans', sans-serif;font-weight:bold;">Rules</div><div style="left:1176.3px;top:407.5px;line-height:23px;font-size:18.2px;color:#fff;white-space:nowrap;font-family:'DejaVu Sans', 'Liberation Sans', sans-serif;font-weight:bold;">Checked</div><div style="left:1502.8px;top:407.5px;line-height:23px;font-size:18.2px;color:#fff;white-space:nowrap;font-family:'DejaVu Sans', 'Liberation Sans', sans-serif;font-weight:bold;">Failed</div><div style="left:1784.4px;top:407.5px;line-height:23px;font-size:18.2px;color:#fff;white-space:nowrap;font-family:'DejaVu Sans', 'Liberation Sans', sans-serif;font-weight:bold;">Passed</div><div style="left:392px;top:436.0px;line-height:23px;font-size:17.9px;color:#0000ee;white-space:nowrap;font-family:'DejaVu Sans', 'Liberation Sans', sans-serif;letter-spacing:-0.016px;text-decoration:underline;text-decoration-thickness:1px;text-underline-offset:2.5px;">Mandatory rules</div><div style="left:1045px;top:436.0px;line-height:23px;font-size:17.9px;color:#000;white-space:nowrap;font-family:'DejaVu Sans', 'Liberation Sans', sans-serif;">0</div><div style="left:1413px;top:436.0px;line-height:23px;font-size:17.9px;color:#000;white-space:nowrap;font-family:'DejaVu Sans', 'Liberation Sans', sans-serif;">0</div><div style="left:1674px;top:436.0px;line-height:23px;font-size:17.9px;color:#000;white-space:nowrap;font-family:'DejaVu Sans', 'Liberation Sans', sans-serif;">0</div><div style="left:392px;top:464.5px;line-height:23px;font-size:17.9px;color:#0000ee;white-space:nowrap;font-family:'DejaVu Sans', 'Liberation Sans', sans-serif;letter-spacing:0.01px;text-decoration:underline;text-decoration-thickness:1px;text-underline-offset:2.5px;">Required rules</div><div style="left:1045px;top:464.5px;line-height:23px;font-size:17.9px;color:#000;white-space:nowrap;font-family:'DejaVu Sans', 'Liberation Sans', sans-serif;">22</div><div style="left:1413px;top:464.5px;line-height:23px;font-size:17.9px;color:#ff0000;white-space:nowrap;font-family:'DejaVu Sans', 'Liberation Sans', sans-serif;font-weight:bold;">1</div><div style="left:1674px;top:464.5px;line-height:23px;font-size:17.9px;color:#000;white-space:nowrap;font-family:'DejaVu Sans', 'Liberation Sans', sans-serif;">21</div><div style="left:392px;top:492.5px;line-height:23px;font-size:17.9px;color:#0000ee;white-space:nowrap;font-family:'DejaVu Sans', 'Liberation Sans', sans-serif;letter-spacing:0.054px;text-decoration:underline;text-decoration-thickness:1px;text-underline-offset:2.5px;">Advisory rules</div><div style="left:1045px;top:492.5px;line-height:23px;font-size:17.9px;color:#000;white-space:nowrap;font-family:'DejaVu Sans', 'Liberation Sans', sans-serif;">0</div><div style="left:1413px;top:492.5px;line-height:23px;font-size:17.9px;color:#000;white-space:nowrap;font-family:'DejaVu Sans', 'Liberation Sans', sans-serif;">0</div><div style="left:1674px;top:492.5px;line-height:23px;font-size:17.9px;color:#000;white-space:nowrap;font-family:'DejaVu Sans', 'Liberation Sans', sans-serif;">0</div><div style="left:379px;top:874px;width:1596px;height:29px;background:#000080;"></div><div style="left:379px;top:874px;width:1px;height:172px;background:#000;"></div><div style="left:1011px;top:874px;width:1px;height:172px;background:#000;"></div><div style="left:1172px;top:874px;width:1px;height:172px;background:#000;"></div><div style="left:1667px;top:874px;width:1px;height:172px;background:#000;"></div><div style="left:1800px;top:874px;width:1px;height:172px;background:#000;"></div><div style="left:1974px;top:874px;width:1px;height:172px;background:#000;"></div><div style="left:379px;top:874px;width:1596px;height:1px;background:#000;"></div><div style="left:379px;top:903px;width:1596px;height:1px;background:#000;"></div><div style="left:379px;top:932px;width:1596px;height:1px;background:#000;"></div><div style="left:379px;top:960px;width:1596px;height:1px;background:#000;"></div><div style="left:379px;top:988px;width:1596px;height:1px;background:#000;"></div><div style="left:379px;top:1016px;width:1596px;height:1px;background:#000;"></div><div style="left:379px;top:1045px;width:1596px;height:1px;background:#000;"></div><div style="left:649.0px;top:878.0px;line-height:23px;font-size:18.2px;color:#fff;white-space:nowrap;font-family:'DejaVu Sans', 'Liberation Sans', sans-serif;font-weight:bold;">Category</div><div style="left:1044.6px;top:878.0px;line-height:23px;font-size:18.2px;color:#fff;white-space:nowrap;font-family:'DejaVu Sans', 'Liberation Sans', sans-serif;font-weight:bold;">Identifier</div><div style="left:1374.3px;top:878.0px;line-height:23px;font-size:18.2px;color:#fff;white-space:nowrap;font-family:'DejaVu Sans', 'Liberation Sans', sans-serif;font-weight:bold;">Synopsis</div><div style="left:1682.9px;top:878.0px;line-height:23px;font-size:18.2px;color:#fff;white-space:nowrap;font-family:'DejaVu Sans', 'Liberation Sans', sans-serif;font-weight:bold;">Violations</div><div style="left:1820.9px;top:878.0px;line-height:23px;font-size:18.2px;color:#fff;white-space:nowrap;font-family:'DejaVu Sans', 'Liberation Sans', sans-serif;font-weight:bold;">Justifications</div><div style="left:386px;top:906.0px;line-height:23px;font-size:17.9px;color:#000;white-space:nowrap;font-family:'DejaVu Sans', 'Liberation Sans', sans-serif;letter-spacing:0.473px;">SCS 2.5. NAMING</div><div style="left:1018px;top:906.0px;line-height:23px;font-size:17.9px;color:#000;white-space:nowrap;font-family:'DejaVu Sans', 'Liberation Sans', sans-serif;letter-spacing:0.542px;">SDR-11-12-1</div><div style="left:1179px;top:906.0px;line-height:23px;font-size:17.9px;color:#000;white-space:nowrap;font-family:'DejaVu Sans', 'Liberation Sans', sans-serif;letter-spacing:-0.064px;">Pascal case name</div><div style="left:1674px;top:906.0px;line-height:23px;font-size:17.9px;color:#000;white-space:nowrap;font-family:'DejaVu Sans', 'Liberation Sans', sans-serif;">0</div><div style="left:1807px;top:906.0px;line-height:23px;font-size:17.9px;color:#000;white-space:nowrap;font-family:'DejaVu Sans', 'Liberation Sans', sans-serif;">0</div><div style="left:386px;top:934.5px;line-height:23px;font-size:17.9px;color:#000;white-space:nowrap;font-family:'DejaVu Sans', 'Liberation Sans', sans-serif;letter-spacing:0.473px;">SCS 2.5. NAMING</div><div style="left:1018px;top:934.5px;line-height:23px;font-size:17.9px;color:#000;white-space:nowrap;font-family:'DejaVu Sans', 'Liberation Sans', sans-serif;letter-spacing:0.401px;">SDR-18</div><div style="left:1179px;top:934.5px;line-height:23px;font-size:17.9px;color:#000;white-space:nowrap;font-family:'DejaVu Sans', 'Liberation Sans', sans-serif;letter-spacing:-0.11px;">Diagram name</div><div style="left:1674px;top:934.5px;line-height:23px;font-size:17.9px;color:#000;white-space:nowrap;font-family:'DejaVu Sans', 'Liberation Sans', sans-serif;">0</div><div style="left:1807px;top:934.5px;line-height:23px;font-size:17.9px;color:#000;white-space:nowrap;font-family:'DejaVu Sans', 'Liberation Sans', sans-serif;">0</div><div style="left:386px;top:962.5px;line-height:23px;font-size:17.9px;color:#000;white-space:nowrap;font-family:'DejaVu Sans', 'Liberation Sans', sans-serif;letter-spacing:0.473px;">SCS 2.5. NAMING</div><div style="left:1018px;top:962.5px;line-height:23px;font-size:17.9px;color:#000;white-space:nowrap;font-family:'DejaVu Sans', 'Liberation Sans', sans-serif;letter-spacing:0.401px;">SDR-19</div><div style="left:1179px;top:962.5px;line-height:23px;font-size:17.9px;color:#000;white-space:nowrap;font-family:'DejaVu Sans', 'Liberation Sans', sans-serif;letter-spacing:0.051px;">Accumulator name (iterated operators)</div><div style="left:1674px;top:962.5px;line-height:23px;font-size:17.9px;color:#000;white-space:nowrap;font-family:'DejaVu Sans', 'Liberation Sans', sans-serif;">0</div><div style="left:1807px;top:962.5px;line-height:23px;font-size:17.9px;color:#000;white-space:nowrap;font-family:'DejaVu Sans', 'Liberation Sans', sans-serif;">0</div><div style="left:386px;top:990.5px;line-height:23px;font-size:17.9px;color:#000;white-space:nowrap;font-family:'DejaVu Sans', 'Liberation Sans', sans-serif;letter-spacing:0.473px;">SCS 2.5. NAMING</div><div style="left:1018px;top:990.5px;line-height:23px;font-size:17.9px;color:#000;white-space:nowrap;font-family:'DejaVu Sans', 'Liberation Sans', sans-serif;letter-spacing:0.401px;">SDR-20</div><div style="left:1179px;top:990.5px;line-height:23px;font-size:17.9px;color:#000;white-space:nowrap;font-family:'DejaVu Sans', 'Liberation Sans', sans-serif;letter-spacing:0.054px;">Exit condition name (iterated operators)</div><div style="left:1674px;top:990.5px;line-height:23px;font-size:17.9px;color:#000;white-space:nowrap;font-family:'DejaVu Sans', 'Liberation Sans', sans-serif;">0</div><div style="left:1807px;top:990.5px;line-height:23px;font-size:17.9px;color:#000;white-space:nowrap;font-family:'DejaVu Sans', 'Liberation Sans', sans-serif;">0</div><div style="left:386px;top:1019.0px;line-height:23px;font-size:17.9px;color:#000;white-space:nowrap;font-family:'DejaVu Sans', 'Liberation Sans', sans-serif;letter-spacing:0.473px;">SCS 2.5. NAMING</div><div style="left:1018px;top:1019.0px;line-height:23px;font-size:17.9px;color:#000;white-space:nowrap;font-family:'DejaVu Sans', 'Liberation Sans', sans-serif;letter-spacing:0.401px;">SDR-21</div><div style="left:1179px;top:1019.0px;line-height:23px;font-size:17.9px;color:#000;white-space:nowrap;font-family:'DejaVu Sans', 'Liberation Sans', sans-serif;letter-spacing:-0.078px;">Uppercase name</div><div style="left:1674px;top:1019.0px;line-height:23px;font-size:17.9px;color:#000;white-space:nowrap;font-family:'DejaVu Sans', 'Liberation Sans', sans-serif;">0</div><div style="left:1807px;top:1019.0px;line-height:23px;font-size:17.9px;color:#000;white-space:nowrap;font-family:'DejaVu Sans', 'Liberation Sans', sans-serif;">0</div></div></div>
<div style="left:1987px;top:227px;width:22px;height:810px;background:#2b2b2b;"></div>
<svg style="left:1991px;top:233px;" width="15" height="12" viewBox="0 0 15 12"><path d="M7.5 1.5L13.5 10.5H1.5z" fill="#9f9f9f" stroke="#9f9f9f" stroke-width="2" stroke-linejoin="round"/></svg>
<svg style="left:1991px;top:1019px;" width="15" height="12" viewBox="0 0 15 12"><path d="M7.5 10.5L13.5 1.5H1.5z" fill="#9f9f9f" stroke="#9f9f9f" stroke-width="2" stroke-linejoin="round"/></svg>
<div style="left:1992px;top:318px;width:13px;height:132px;background:#9f9f9f;border-radius:6.5px;"></div>
<!-- rightpanel -->
<div style="left:2019px;top:191px;width:223px;height:32px;background:#b4bcd4;"></div>
<div style="left:2022.6px;top:196.1px;line-height:21px;font-size:16.81px;color:#2359ad;white-space:nowrap;">Shortcuts</div>
<svg style="left:2224.0px;top:200.3px;" width="13" height="13" viewBox="0 0 13 13"><path d="M1 1l10.7 10.7M11.7 1L1 11.7" stroke="#00126e" stroke-width="2.3"/></svg><svg style="left:2202.2px;top:200.0px;" width="13" height="14" viewBox="0 0 13 14"><path d="M3.5 1h6v7.5M3.5 1v7.5" stroke="#00126e" stroke-width="1.6" fill="none"/><rect x="7.2" y="1" width="2.6" height="7.5" fill="#00126e"/><path d="M0.5 8.6h12" stroke="#00126e" stroke-width="1.7"/><path d="M6.5 9v4.5" stroke="#00126e" stroke-width="1.7"/></svg><svg style="left:2179.8999999999996px;top:203.3px;" width="15" height="10" viewBox="0 0 15 10"><path d="M0.3 0.3h14L7.3 9.3z" fill="#00126e"/></svg>
<div style="left:2018px;top:223px;width:224px;height:818px;background:#e6e9f3;border-left:2px solid #696969;border-top:2px solid #696969;border-right:1px solid #fff;border-bottom:1px solid #fff;"></div>
<div style="left:2018px;top:223px;width:224px;height:1px;background:#a0a0a0;"></div>
<div style="left:2018px;top:223px;width:1px;height:818px;background:#a0a0a0;"></div>
<div style="left:2020px;top:225px;width:221px;height:20px;background:#e8e9ec;border-right:1px solid #000;border-bottom:1px solid #000;border-top:1px solid #fff;border-left:1px solid #fff;"></div><div style="left:2091.9px;top:227.9px;line-height:15px;font-size:12.3px;color:#000;white-space:nowrap;">Mathematical</div>
<div style="left:2020px;top:245px;width:221px;height:1px;background:#f4f5fa;"></div>
<svg style="left:2114px;top:263px;" width="32" height="24" viewBox="0 0 32 24"><rect x="4" y="0" width="24" height="24" fill="#b4d0e8"/><rect x="0" y="6" width="4" height="2" fill="#7f93ae"/><rect x="0" y="18" width="4" height="2" fill="#7f93ae"/><rect x="28" y="12" width="4" height="2" fill="#7f93ae"/><rect x="10" y="11" width="14" height="4" fill="#7f93ae"/><rect x="15" y="6" width="4" height="14" fill="#7f93ae"/></svg>
<div style="left:2114.8px;top:293.5px;line-height:20px;font-size:16px;color:#696d78;white-space:nowrap;letter-spacing:-0.17px;">Plus</div>
<svg style="left:2114px;top:332px;" width="32" height="24" viewBox="0 0 32 24"><rect x="4" y="0" width="24" height="24" fill="#b4d0e8"/><rect x="0" y="6" width="4" height="2" fill="#7f93ae"/><rect x="0" y="18" width="4" height="2" fill="#7f93ae"/><rect x="28" y="12" width="4" height="2" fill="#7f93ae"/><rect x="10" y="11" width="14" height="4" fill="#7f93ae"/></svg>
<div style="left:2109.1px;top:362.5px;line-height:20px;font-size:16px;color:#696d78;white-space:nowrap;letter-spacing:-0.17px;">Minus</div>
<svg style="left:2114px;top:401px;" width="32" height="24" viewBox="0 0 32 24"><rect x="4" y="0" width="24" height="24" fill="#b4d0e8"/><rect x="0" y="6" width="4" height="2" fill="#7f93ae"/><rect x="0" y="18" width="4" height="2" fill="#7f93ae"/><rect x="28" y="12" width="4" height="2" fill="#7f93ae"/><path d="M12 8l10 10M22 8l-10 10" stroke="#7f93ae" stroke-width="4.2"/></svg>
<div style="left:2084.9px;top:431.5px;line-height:20px;font-size:16px;color:#696d78;white-space:nowrap;letter-spacing:-0.17px;">Multiplication</div>
<svg style="left:2114px;top:470px;" width="32" height="24" viewBox="0 0 32 24"><rect x="4" y="0" width="24" height="24" fill="#b4d0e8"/><rect x="0" y="6" width="4" height="2" fill="#7f93ae"/><rect x="0" y="18" width="4" height="2" fill="#7f93ae"/><rect x="28" y="12" width="4" height="2" fill="#7f93ae"/><path d="M12 19l11-11" stroke="#7f93ae" stroke-width="4.2"/></svg>
<div style="left:2057.5px;top:500.5px;line-height:20px;font-size:16px;color:#696d78;white-space:nowrap;letter-spacing:-0.17px;">Polymorphic Division</div>
<svg style="left:2114px;top:539px;" width="32" height="24" viewBox="0 0 32 24"><rect x="4" y="0" width="24" height="24" fill="#b4d0e8"/><rect x="0" y="6" width="4" height="2" fill="#7f93ae"/><rect x="0" y="18" width="4" height="2" fill="#7f93ae"/><rect x="28" y="12" width="4" height="2" fill="#7f93ae"/><text x="17" y="18.6" font-size="15.5" font-weight="bold" fill="#7f93ae" text-anchor="middle" font-family="Liberation Sans, sans-serif">M</text></svg>
<div style="left:2104.3px;top:569.5px;line-height:20px;font-size:16px;color:#696d78;white-space:nowrap;letter-spacing:-0.17px;">Modulo</div>
<svg style="left:2114px;top:608px;" width="32" height="24" viewBox="0 0 32 24"><rect x="4" y="0" width="24" height="24" fill="#b4d0e8"/><rect x="0" y="12" width="4" height="2" fill="#7f93ae"/><rect x="28" y="12" width="4" height="2" fill="#7f93ae"/><rect x="10" y="11" width="14" height="4" fill="#7f93ae"/></svg>
<div style="left:2086.0px;top:638.5px;line-height:20px;font-size:16px;color:#696d78;white-space:nowrap;letter-spacing:-0.17px;">Unary Minus</div>
<svg style="left:2114px;top:677px;" width="32" height="24" viewBox="0 0 32 24"><rect x="4" y="0" width="24" height="24" fill="#b4d0e8"/><rect x="0" y="12" width="4" height="2" fill="#7f93ae"/><rect x="28" y="12" width="4" height="2" fill="#7f93ae"/><text x="17" y="18.6" font-size="15.5" font-weight="bold" fill="#7f93ae" text-anchor="middle" font-family="Liberation Sans, sans-serif">C</text></svg>
<div style="left:2082.6px;top:707.5px;line-height:20px;font-size:16px;color:#696d78;white-space:nowrap;letter-spacing:-0.17px;">Numeric Cast</div>
<div style="left:2020px;top:900px;width:221px;height:20px;background:#e8e9ec;border-right:1px solid #000;border-bottom:1px solid #000;border-top:1px solid #fff;border-left:1px solid #fff;"></div><div style="left:2095.3px;top:902.9px;line-height:15px;font-size:12.3px;color:#000;white-space:nowrap;">Comparison</div>
<div style="left:2020px;top:920px;width:221px;height:20px;background:#e8e9ec;border-right:1px solid #000;border-bottom:1px solid #000;border-top:1px solid #fff;border-left:1px solid #fff;"></div><div style="left:2109.0px;top:922.9px;line-height:15px;font-size:12.3px;color:#000;white-space:nowrap;">Logical</div>
<div style="left:2020px;top:940px;width:221px;height:20px;background:#e8e9ec;border-right:1px solid #000;border-bottom:1px solid #000;border-top:1px solid #fff;border-left:1px solid #fff;"></div><div style="left:2087.1px;top:942.9px;line-height:15px;font-size:12.3px;color:#000;white-space:nowrap;">Structure/Array</div>
<div style="left:2020px;top:960px;width:221px;height:20px;background:#e8e9ec;border-right:1px solid #000;border-bottom:1px solid #000;border-top:1px solid #fff;border-left:1px solid #fff;"></div><div style="left:2115.1px;top:962.9px;line-height:15px;font-size:12.3px;color:#000;white-space:nowrap;">Time</div>
<div style="left:2020px;top:980px;width:221px;height:20px;background:#e8e9ec;border-right:1px solid #000;border-bottom:1px solid #000;border-top:1px solid #fff;border-left:1px solid #fff;"></div><div style="left:2109.4px;top:982.9px;line-height:15px;font-size:12.3px;color:#000;white-space:nowrap;">Choice</div>
<div style="left:2020px;top:1000px;width:221px;height:20px;background:#e8e9ec;border-right:1px solid #000;border-bottom:1px solid #000;border-top:1px solid #fff;border-left:1px solid #fff;"></div><div style="left:2109.0px;top:1002.9px;line-height:15px;font-size:12.3px;color:#000;white-space:nowrap;">Bitwise</div>
<div style="left:2020px;top:1020px;width:221px;height:20px;background:#e8e9ec;border-right:1px solid #000;border-bottom:1px solid #000;border-top:1px solid #fff;border-left:1px solid #fff;"></div><div style="left:2093.0px;top:1022.9px;line-height:15px;font-size:12.3px;color:#000;white-space:nowrap;">Higher Order</div>
<!-- bottom -->
<div style="left:3px;top:1047px;width:1116px;height:32px;background:#e8e9ef;"></div>
<div style="left:6px;top:1051.1px;line-height:23px;font-size:17.99px;color:#15257c;white-space:nowrap;">Output</div>
<svg style="left:1100.8px;top:1056.3px;" width="13" height="13" viewBox="0 0 13 13"><path d="M1 1l10.7 10.7M11.7 1L1 11.7" stroke="#00126e" stroke-width="2.3"/></svg><svg style="left:1079.0px;top:1056.0px;" width="13" height="14" viewBox="0 0 13 14"><path d="M3.5 1h6v7.5M3.5 1v7.5" stroke="#00126e" stroke-width="1.6" fill="none"/><rect x="7.2" y="1" width="2.6" height="7.5" fill="#00126e"/><path d="M0.5 8.6h12" stroke="#00126e" stroke-width="1.7"/><path d="M6.5 9v4.5" stroke="#00126e" stroke-width="1.7"/></svg><svg style="left:1056.7px;top:1059.3px;" width="15" height="10" viewBox="0 0 15 10"><path d="M0.3 0.3h14L7.3 9.3z" fill="#00126e"/></svg>
<div style="left:4px;top:1079px;width:1115px;height:258px;background:#fff;border-left:1px solid #cdd4e2;border-right:2px solid #cdd4e2;border-top:3px solid #d3d9e6;border-bottom:1px solid #6a7590;"></div>
<div style="left:1119px;top:1079px;width:1px;height:258px;background:#b3bdca;"></div>
<div style="left:3px;top:1336px;width:1117px;height:1px;background:#6a7590;"></div>
<div style="left:154px;top:1083px;width:1px;height:29px;background:#e2e2e2;"></div>
<div style="left:304px;top:1083px;width:1px;height:29px;background:#e2e2e2;"></div>
<div style="left:404px;top:1083px;width:1px;height:29px;background:#e2e2e2;"></div>
<div style="left:1004px;top:1083px;width:1px;height:29px;background:#e2e2e2;"></div>
<div style="left:5px;top:1111.5px;width:1000px;height:1px;background:#ececec;"></div>
<div style="left:161px;top:1087.5px;line-height:20px;font-size:16px;color:#000;white-space:nowrap;letter-spacing:-0.13px;">Category</div>
<div style="left:311px;top:1087.5px;line-height:20px;font-size:16px;color:#000;white-space:nowrap;letter-spacing:-0.13px;">Code</div>
<div style="left:411px;top:1087.5px;line-height:20px;font-size:16px;color:#000;white-space:nowrap;letter-spacing:-0.13px;">Message</div>
<div style="left:27px;top:1113px;width:978px;height:21px;background:#f0f0f0;"></div>
<svg style="left:8px;top:1116px;" width="11" height="13" viewBox="0 0 11 13"><path d="M0.7 0.7h6l3.6 3.6v8H0.7z" fill="#fff" stroke="#2a6cc4" stroke-width="1.2"/><path d="M6.5 0.7v3.8h3.8z" fill="#2a6cc4"/><path d="M2.7 6.5h5.5M2.7 8.7h5.5M2.7 10.8h5.5" stroke="#2a6cc4" stroke-width="1"/></svg>
<div style="left:30px;top:1113.0px;line-height:20px;font-size:16px;color:#000;white-space:nowrap;letter-spacing:-0.13px;">MetricRule</div>
<div style="left:60px;top:1135.5px;line-height:20px;font-size:16px;color:#000;white-space:nowrap;letter-spacing:-0.13px;">Error</div>
<div style="left:161px;top:1134.5px;line-height:20px;font-size:16px;color:#000;white-space:nowrap;letter-spacing:-0.13px;">Violation</div>
<div style="left:311px;top:1134.5px;line-height:20px;font-size:16px;color:#000;white-space:nowrap;letter-spacing:-0.13px;">SDR-32 (R)</div>
<div style="left:411px;top:1134.5px;line-height:20px;font-size:16px;color:#000;white-space:nowrap;letter-spacing:-0.135px;">CruiseControl: The model CruiseControl shall not use SCADE product libraries or</div>
<div style="left:411px;top:1154.5px;line-height:20px;font-size:16px;color:#000;white-space:nowrap;letter-spacing:-0.135px;">libraries outside of the CM workspace:</div>
<div style="left:411px;top:1174.5px;line-height:20px;font-size:16px;color:#000;white-space:nowrap;letter-spacing:-0.135px;">$(SCADE)\libraries\SC65\libdigital\libdigital.etp</div>
<div style="left:411px;top:1194.5px;line-height:20px;font-size:16px;color:#000;white-space:nowrap;letter-spacing:-0.135px;">$(SCADE)\libraries\SC65\liblinear\liblinear.etp</div>
<div style="left:411px;top:1214.5px;line-height:20px;font-size:16px;color:#000;white-space:nowrap;letter-spacing:-0.135px;">$(SCADE)\libraries\SC65\libmath\libmath.etp</div>
<div style="left:411px;top:1234.5px;line-height:20px;font-size:16px;color:#000;white-space:nowrap;letter-spacing:-0.135px;">$(SCADE)\libraries\SC65\libmathext\libmathext.etp</div>
<div style="left:411px;top:1254.5px;line-height:20px;font-size:16px;color:#000;white-space:nowrap;letter-spacing:-0.135px;">$(SCADE)\libraries\SC65\libpwlinear\libpwlinear.etp</div>
<div style="left:411px;top:1274.5px;line-height:20px;font-size:16px;color:#000;white-space:nowrap;letter-spacing:-0.135px;">$(SCADE)\libraries\SC65\libverif\libverif.etp</div>
<svg style="left:37px;top:1208px;" width="12" height="12" viewBox="0 0 12 12"><circle cx="6" cy="6" r="5.6" fill="#d9142a"/><path d="M3.7 3.7l4.6 4.6M8.3 3.7L3.7 8.3" stroke="#fff" stroke-width="1.7"/></svg>
<div style="left:515px;top:1337px;width:79px;height:31px;background:#e8e9ee;"></div>
<div style="left:10.5px;top:1342.5px;line-height:21px;font-size:16.5px;color:#12207c;white-space:nowrap;letter-spacing:-0.429px;">Messages</div>
<div style="left:98.2px;top:1342.5px;line-height:21px;font-size:16.5px;color:#12207c;white-space:nowrap;letter-spacing:0.862px;">Dump</div>
<div style="left:161.4px;top:1342.5px;line-height:21px;font-size:16.5px;color:#12207c;white-space:nowrap;letter-spacing:0.077px;">Build</div>
<div style="left:216px;top:1342.5px;line-height:21px;font-size:16.5px;color:#12207c;white-space:nowrap;letter-spacing:0.426px;">Simulator</div>
<div style="left:308.2px;top:1342.5px;line-height:21px;font-size:16.5px;color:#12207c;white-space:nowrap;letter-spacing:-0.438px;">MATLAB</div>
<div style="left:391.4px;top:1342.5px;line-height:21px;font-size:16.5px;color:#12207c;white-space:nowrap;letter-spacing:0.028px;">Inconsistencies</div>
<div style="left:521.1px;top:1342.5px;line-height:21px;font-size:16.5px;color:#1b3a6e;white-space:nowrap;letter-spacing:0.366px;">Info Log</div>
<div style="left:1125px;top:1047px;width:1117px;height:32px;background:#b4bcd4;"></div>
<div style="left:1128.5px;top:1051.7px;line-height:22px;font-size:17.01px;color:#2359ad;white-space:nowrap;">Properties of MetricRule</div>
<svg style="left:2224.0px;top:1056.3px;" width="13" height="13" viewBox="0 0 13 13"><path d="M1 1l10.7 10.7M11.7 1L1 11.7" stroke="#00126e" stroke-width="2.3"/></svg><svg style="left:2202.2px;top:1056.0px;" width="13" height="14" viewBox="0 0 13 14"><path d="M3.5 1h6v7.5M3.5 1v7.5" stroke="#00126e" stroke-width="1.6" fill="none"/><rect x="7.2" y="1" width="2.6" height="7.5" fill="#00126e"/><path d="M0.5 8.6h12" stroke="#00126e" stroke-width="1.7"/><path d="M6.5 9v4.5" stroke="#00126e" stroke-width="1.7"/></svg><svg style="left:2179.8999999999996px;top:1059.3px;" width="15" height="10" viewBox="0 0 15 10"><path d="M0.3 0.3h14L7.3 9.3z" fill="#00126e"/></svg>
<div style="left:1124px;top:1079px;width:334px;height:291px;background:#fff;border:1px solid #7c8294;"></div>
<div style="left:1141px;top:1095px;width:14px;height:1px;border-top:1px dotted #9c9c9c;"></div>
<div style="left:1156px;top:1081px;width:61px;height:28px;background:#f0f0f0;"></div>
<div style="left:1159px;top:1084.5px;line-height:22px;font-size:17.58px;color:#000;white-space:nowrap;">Default</div>
<div style="left:1458px;top:1079px;width:784px;height:291px;background:#f8f8f8;border-left:3px solid #dfe2ea;border-right:2px solid #dfe2ea;"></div>
<div style="left:1772px;top:1214.5px;line-height:20px;font-size:16px;color:#000;white-space:nowrap;letter-spacing:-0.13px;">No properties available</div>
<div style="left:0px;top:1370px;width:2245px;height:1px;background:#69748f;"></div>
<div style="left:0px;top:1371px;width:2245px;height:30px;background:linear-gradient(180deg,#e9edf6 0,#dbe0ec 2px,#d3d9e7 12px,#cdd3e3 18px,#bcc4da 20px,#b6bed6 100%);"></div>
<div style="left:6px;top:1375.0px;line-height:21px;font-size:16.16px;color:#12207c;white-space:nowrap;">For Help, press F1</div>
<div style="left:1190px;top:1372px;width:2px;height:27px;background:linear-gradient(90deg,#b3bace 0 50%,#f0f2f9 50% 100%);"></div>
<div style="left:1740px;top:1372px;width:2px;height:27px;background:linear-gradient(90deg,#b3bace 0 50%,#f0f2f9 50% 100%);"></div>
<div style="left:1906px;top:1372px;width:2px;height:27px;background:linear-gradient(90deg,#b3bace 0 50%,#f0f2f9 50% 100%);"></div>
<div style="left:2066px;top:1372px;width:2px;height:27px;background:linear-gradient(90deg,#b3bace 0 50%,#f0f2f9 50% 100%);"></div>
<div style="left:2087px;top:1372px;width:2px;height:27px;background:linear-gradient(90deg,#b3bace 0 50%,#f0f2f9 50% 100%);"></div>
<div style="left:2125px;top:1372px;width:2px;height:27px;background:linear-gradient(90deg,#b3bace 0 50%,#f0f2f9 50% 100%);"></div>
<div style="left:2171px;top:1372px;width:2px;height:27px;background:linear-gradient(90deg,#b3bace 0 50%,#f0f2f9 50% 100%);"></div>
<div style="left:2216px;top:1372px;width:2px;height:27px;background:linear-gradient(90deg,#b3bace 0 50%,#f0f2f9 50% 100%);"></div>
<div style="left:2069px;top:1372px;width:16px;height:16px;background:#fff;"></div>
<svg style="left:2071px;top:1373.5px;" width="12" height="13" viewBox="0 0 12 13"><path d="M5 0.5h2v5h3L6 9 2 5.5h3z" fill="#12335f"/><rect x="0" y="9.5" width="12" height="3" fill="#12335f"/></svg>
<div style="left:2092.6px;top:1376.2px;line-height:19px;font-size:15.2px;color:#aaa6ba;white-space:nowrap;letter-spacing:-0.427px;">CAP</div>
<div style="left:2131.2px;top:1375.7px;line-height:20px;font-size:15.8px;color:#12207c;white-space:nowrap;letter-spacing:0.909px;">NUM</div>
<div style="left:2176.8px;top:1376.2px;line-height:19px;font-size:15.2px;color:#aaa6ba;white-space:nowrap;letter-spacing:-1.182px;">SCRL</div>
<svg style="left:2232px;top:1388px;" width="10" height="10" viewBox="0 0 10 10"><rect x="8" y="0" width="2" height="2" fill="#8e96b0"/><rect x="4" y="4" width="2" height="2" fill="#8e96b0"/><rect x="8" y="4" width="2" height="2" fill="#8e96b0"/><rect x="0" y="8" width="2" height="2" fill="#8e96b0"/><rect x="4" y="8" width="2" height="2" fill="#8e96b0"/><rect x="8" y="8" width="2" height="2" fill="#8e96b0"/></svg>
</div>
<div id="winborder"></div>
<div id="winshadow"></div>
</body></html>
